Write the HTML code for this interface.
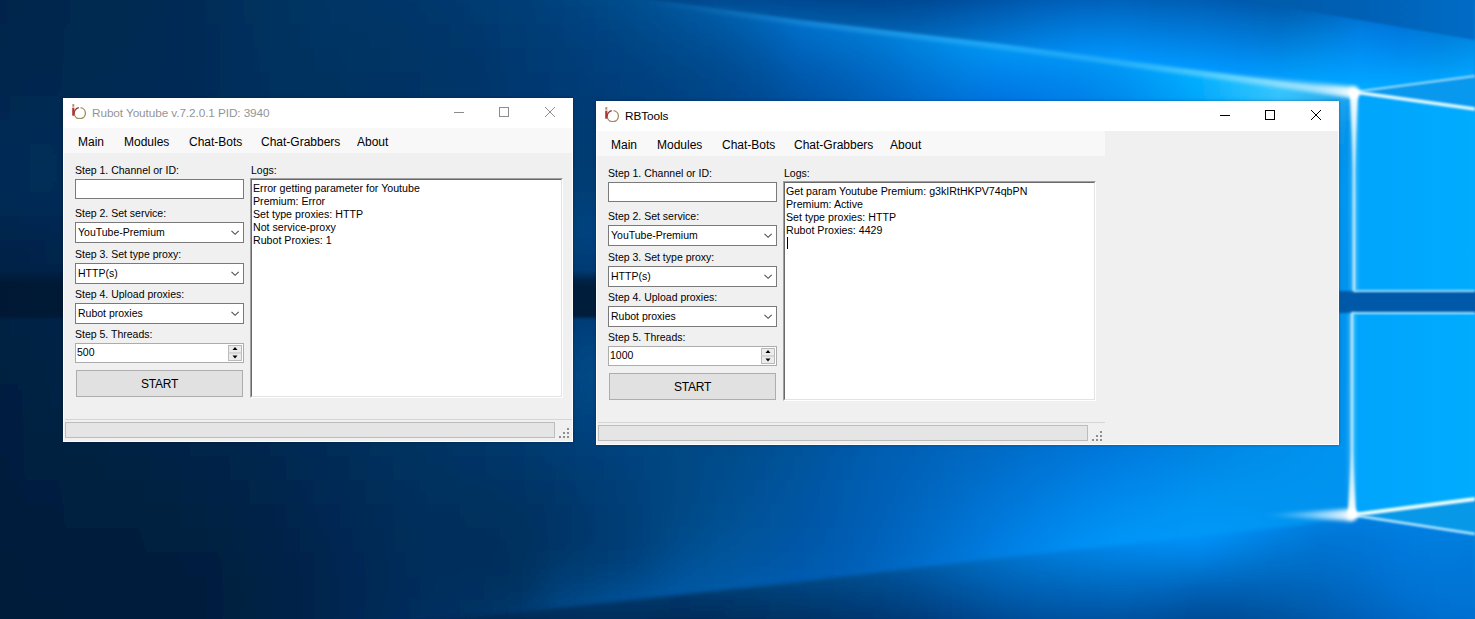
<!DOCTYPE html>
<html><head><meta charset="utf-8">
<style>
*{margin:0;padding:0;box-sizing:border-box}
html,body{width:1475px;height:619px;overflow:hidden;background:#003060}
body{position:relative;font-family:"Liberation Sans",sans-serif;-webkit-font-smoothing:antialiased}
.win{position:absolute;background:#f0f0f0;overflow:hidden;box-shadow:0 0 3px rgba(0,10,30,0.35)}
.bord{position:absolute;left:0;top:0;right:0;bottom:0;border:1px solid rgba(255,255,255,0.85);pointer-events:none}
.tb{position:absolute;left:0;top:0;right:0;height:30px;background:#fff}
.ttl{position:absolute;left:29px;top:7px;font-size:11.8px;letter-spacing:-0.1px;line-height:16px;white-space:nowrap}
.ico{position:absolute;left:8px;top:5px;width:16px;height:16px}
.menu{position:absolute;left:1px;top:30px;width:508px;height:25px;background:#f8f8f8}
.mi{position:absolute;top:37px;font-size:12px;line-height:14px;color:#000;white-space:nowrap}
.lbl{position:absolute;font-size:10.5px;line-height:12px;color:#000;white-space:nowrap}
.tbox{position:absolute;background:#fff;border:1px solid #7a7a7a}
.cmb{position:absolute;background:#fff;border:1px solid #7a7a7a;font-size:10.5px;line-height:12px;padding:3px 0 0 2px;white-space:nowrap}
.chev{position:absolute;left:155px;top:7px;width:9px;height:6px}
.num{position:absolute;background:#fff;border:1px solid #acacac;font-size:10.5px;line-height:12px;padding:2px 0 0 1px;white-space:nowrap}
.spin{position:absolute;left:152px;top:1px;width:14px;height:16px}
.btn{position:absolute;background:#e1e1e1;border:1px solid #adadad;font-size:12px;letter-spacing:-0.25px;text-align:center;color:#000}
.logs{position:absolute;background:#fff;border-top:1px solid #a0a0a0;border-left:1px solid #a0a0a0;border-right:1px solid #fff;border-bottom:1px solid #fff}
.logsin{position:absolute;left:0;top:0;right:0;bottom:0;border-top:1px solid #696969;border-left:1px solid #696969;border-right:1px solid #e3e3e3;border-bottom:1px solid #e3e3e3;padding:2px 0 0 1px;font-size:10.65px;line-height:13px;white-space:pre;color:#000}
.sep{position:absolute;height:1px;background:#d5d5d5}
.prog{position:absolute;background:#e5e5e5;border:1px solid #bcbcbc}
.grip{position:absolute;width:12px;height:12px}
</style></head><body>
<svg id="bg" width="1475" height="619" viewBox="0 0 1475 619" style="position:absolute;left:0;top:0">
<defs>
<filter id="fbv" filterUnits="userSpaceOnUse" x="-100" y="-100" width="1675" height="819"><feGaussianBlur stdDeviation="3 12"/></filter>
<filter id="fbt" filterUnits="userSpaceOnUse" x="-100" y="-100" width="1675" height="819"><feGaussianBlur stdDeviation="3 5"/></filter>
<filter id="b1" filterUnits="userSpaceOnUse" x="-100" y="-100" width="1675" height="819"><feGaussianBlur stdDeviation="1"/></filter>
<filter id="b2" filterUnits="userSpaceOnUse" x="-100" y="-100" width="1675" height="819"><feGaussianBlur stdDeviation="2"/></filter>
<filter id="b4" filterUnits="userSpaceOnUse" x="-100" y="-100" width="1675" height="819"><feGaussianBlur stdDeviation="4"/></filter>
<filter id="b8" filterUnits="userSpaceOnUse" x="-100" y="-100" width="1675" height="819"><feGaussianBlur stdDeviation="8"/></filter>
<clipPath id="cTop"><polygon points="600,-8 640,-2 800,20 1000,44 1200,71 1354,92 1475,76 1475,-20 600,-20"/></clipPath>
<clipPath id="cFloor"><polygon points="380,626 480,616 780,584 1000,558 1200,536 1300,525 1352,516 1475,534 1475,640 420,640"/></clipPath>
<linearGradient id="dband" gradientUnits="userSpaceOnUse" x1="0" y1="0" x2="1339" y2="0">
<stop offset="0" stop-color="#001834"/><stop offset="0.023" stop-color="#001935"/><stop offset="0.436" stop-color="#001e3c"/><stop offset="1" stop-color="#00386e"/>
</linearGradient>
<linearGradient id="dbandV" gradientUnits="userSpaceOnUse" x1="0" y1="271" x2="0" y2="320">
<stop offset="0" stop-color="#fff" stop-opacity="0"/><stop offset="0.2" stop-color="#fff" stop-opacity="0.85"/><stop offset="0.32" stop-color="#fff" stop-opacity="1"/><stop offset="0.91" stop-color="#fff" stop-opacity="1"/><stop offset="1" stop-color="#fff" stop-opacity="0"/>
</linearGradient>
<linearGradient id="bandA" gradientUnits="userSpaceOnUse" x1="1238" y1="0" x2="1475" y2="0"><stop offset="0" stop-color="#005cac"/><stop offset="0.4" stop-color="#005eb0"/><stop offset="1" stop-color="#006cc6"/></linearGradient>
<linearGradient id="e1g" gradientUnits="userSpaceOnUse" x1="640" y1="0" x2="1354" y2="0"><stop offset="0" stop-color="#fff" stop-opacity="0"/><stop offset="0.3" stop-color="#fff" stop-opacity="0.35"/><stop offset="0.7" stop-color="#fff" stop-opacity="0.55"/><stop offset="1" stop-color="#fff" stop-opacity="1"/></linearGradient>
<mask id="mE1"><rect x="-10" y="-10" width="1500" height="200" fill="url(#e1g)"/></mask>
<linearGradient id="sg1" gradientUnits="userSpaceOnUse" x1="1080" y1="0" x2="1356" y2="0"><stop offset="0" stop-color="#c0ecff" stop-opacity="0"/><stop offset="0.6" stop-color="#d8f4ff" stop-opacity="0.3"/><stop offset="0.85" stop-color="#e8f8ff" stop-opacity="0.55"/><stop offset="1" stop-color="#ffffff" stop-opacity="1"/></linearGradient>
<linearGradient id="sg2" gradientUnits="userSpaceOnUse" x1="1260" y1="0" x2="1356" y2="0"><stop offset="0" stop-color="#c0ecff" stop-opacity="0"/><stop offset="0.5" stop-color="#d8f4ff" stop-opacity="0.5"/><stop offset="1" stop-color="#ffffff" stop-opacity="1"/></linearGradient>
<linearGradient id="vg1" gradientUnits="userSpaceOnUse" x1="0" y1="92" x2="0" y2="170"><stop offset="0" stop-color="#fff" stop-opacity="1"/><stop offset="1" stop-color="#fff" stop-opacity="0"/></linearGradient>
<linearGradient id="vg2" gradientUnits="userSpaceOnUse" x1="0" y1="515" x2="0" y2="450"><stop offset="0" stop-color="#fff" stop-opacity="1"/><stop offset="1" stop-color="#fff" stop-opacity="0"/></linearGradient>
<mask id="m2"><rect width="1475" height="619" fill="url(#dbandV)"/></mask>
<linearGradient id="paneG" gradientUnits="userSpaceOnUse" x1="1354" y1="0" x2="1475" y2="0">
<stop offset="0" stop-color="#00a4fc"/><stop offset="1" stop-color="#00acff"/>
</linearGradient>
<linearGradient id="s0" gradientUnits="userSpaceOnUse" x1="-40" y1="0" x2="1520" y2="0"><stop offset="0.000" stop-color="#001f46"/><stop offset="0.026" stop-color="#002249"/><stop offset="0.051" stop-color="#00264c"/><stop offset="0.077" stop-color="#00284f"/><stop offset="0.103" stop-color="#002a51"/><stop offset="0.128" stop-color="#002c54"/><stop offset="0.154" stop-color="#002e58"/><stop offset="0.179" stop-color="#00315d"/><stop offset="0.205" stop-color="#003562"/><stop offset="0.231" stop-color="#003766"/><stop offset="0.256" stop-color="#00396a"/><stop offset="0.282" stop-color="#003b6d"/><stop offset="0.308" stop-color="#003d72"/><stop offset="0.333" stop-color="#004077"/><stop offset="0.359" stop-color="#00447d"/><stop offset="0.385" stop-color="#004985"/><stop offset="0.410" stop-color="#01508f"/><stop offset="0.436" stop-color="#01589b"/><stop offset="0.462" stop-color="#0161a9"/><stop offset="0.487" stop-color="#016bb9"/><stop offset="0.513" stop-color="#0177cb"/><stop offset="0.538" stop-color="#0282dc"/><stop offset="0.564" stop-color="#028de8"/><stop offset="0.590" stop-color="#0398f2"/><stop offset="0.615" stop-color="#03a3fa"/><stop offset="0.641" stop-color="#04adff"/><stop offset="0.667" stop-color="#06b6ff"/><stop offset="0.692" stop-color="#08bbff"/><stop offset="0.718" stop-color="#0bbfff"/><stop offset="0.744" stop-color="#0fc4ff"/><stop offset="0.769" stop-color="#16cbff"/><stop offset="0.795" stop-color="#21d2ff"/><stop offset="0.821" stop-color="#2dd7ff"/><stop offset="0.846" stop-color="#36d7ff"/><stop offset="0.872" stop-color="#38d0ff"/><stop offset="0.897" stop-color="#32c4ff"/><stop offset="0.923" stop-color="#28b5fe"/><stop offset="0.949" stop-color="#1da7f9"/><stop offset="0.974" stop-color="#149bf5"/><stop offset="1.000" stop-color="#0c92f3"/></linearGradient>
<linearGradient id="s1" gradientUnits="userSpaceOnUse" x1="-40" y1="0" x2="1520" y2="0"><stop offset="0.000" stop-color="#002046"/><stop offset="0.026" stop-color="#00234a"/><stop offset="0.051" stop-color="#00274d"/><stop offset="0.077" stop-color="#00284f"/><stop offset="0.103" stop-color="#002a50"/><stop offset="0.128" stop-color="#002b53"/><stop offset="0.154" stop-color="#002d57"/><stop offset="0.179" stop-color="#00305c"/><stop offset="0.205" stop-color="#003461"/><stop offset="0.231" stop-color="#003665"/><stop offset="0.256" stop-color="#003768"/><stop offset="0.282" stop-color="#00386b"/><stop offset="0.308" stop-color="#003a6f"/><stop offset="0.333" stop-color="#003c73"/><stop offset="0.359" stop-color="#004079"/><stop offset="0.385" stop-color="#004580"/><stop offset="0.410" stop-color="#004b89"/><stop offset="0.436" stop-color="#005294"/><stop offset="0.462" stop-color="#015aa2"/><stop offset="0.487" stop-color="#0164b1"/><stop offset="0.513" stop-color="#016fc4"/><stop offset="0.538" stop-color="#017bd6"/><stop offset="0.564" stop-color="#0185e1"/><stop offset="0.590" stop-color="#028fea"/><stop offset="0.615" stop-color="#029bf3"/><stop offset="0.641" stop-color="#03a6fc"/><stop offset="0.667" stop-color="#04aeff"/><stop offset="0.692" stop-color="#05b3ff"/><stop offset="0.718" stop-color="#08b6ff"/><stop offset="0.744" stop-color="#0cbcff"/><stop offset="0.769" stop-color="#12c3ff"/><stop offset="0.795" stop-color="#1dccff"/><stop offset="0.821" stop-color="#2cd4ff"/><stop offset="0.846" stop-color="#38d5ff"/><stop offset="0.872" stop-color="#3aceff"/><stop offset="0.897" stop-color="#32c0ff"/><stop offset="0.923" stop-color="#25affa"/><stop offset="0.949" stop-color="#19a1f5"/><stop offset="0.974" stop-color="#0f95f2"/><stop offset="1.000" stop-color="#078df0"/></linearGradient>
<linearGradient id="s2" gradientUnits="userSpaceOnUse" x1="-40" y1="0" x2="1520" y2="0"><stop offset="0.000" stop-color="#002147"/><stop offset="0.026" stop-color="#00244b"/><stop offset="0.051" stop-color="#00274e"/><stop offset="0.077" stop-color="#00294f"/><stop offset="0.103" stop-color="#002950"/><stop offset="0.128" stop-color="#002a52"/><stop offset="0.154" stop-color="#002c57"/><stop offset="0.179" stop-color="#002f5b"/><stop offset="0.205" stop-color="#003360"/><stop offset="0.231" stop-color="#003564"/><stop offset="0.256" stop-color="#003666"/><stop offset="0.282" stop-color="#003668"/><stop offset="0.308" stop-color="#00376c"/><stop offset="0.333" stop-color="#003a70"/><stop offset="0.359" stop-color="#003d76"/><stop offset="0.385" stop-color="#00417c"/><stop offset="0.410" stop-color="#004684"/><stop offset="0.436" stop-color="#004d8e"/><stop offset="0.462" stop-color="#00549a"/><stop offset="0.487" stop-color="#005ca8"/><stop offset="0.513" stop-color="#0067ba"/><stop offset="0.538" stop-color="#0073ce"/><stop offset="0.564" stop-color="#017cd8"/><stop offset="0.590" stop-color="#0186e1"/><stop offset="0.615" stop-color="#0191eb"/><stop offset="0.641" stop-color="#019df6"/><stop offset="0.667" stop-color="#02a6fe"/><stop offset="0.692" stop-color="#03a9ff"/><stop offset="0.718" stop-color="#05acff"/><stop offset="0.744" stop-color="#08b1ff"/><stop offset="0.769" stop-color="#0dbbff"/><stop offset="0.795" stop-color="#18c6ff"/><stop offset="0.821" stop-color="#2ad0ff"/><stop offset="0.846" stop-color="#39d3ff"/><stop offset="0.872" stop-color="#3bcbff"/><stop offset="0.897" stop-color="#30bbfd"/><stop offset="0.923" stop-color="#21a9f6"/><stop offset="0.949" stop-color="#149af1"/><stop offset="0.974" stop-color="#098fee"/><stop offset="1.000" stop-color="#0287ed"/></linearGradient>
<linearGradient id="s3" gradientUnits="userSpaceOnUse" x1="-40" y1="0" x2="1520" y2="0"><stop offset="0.000" stop-color="#002249"/><stop offset="0.026" stop-color="#00254c"/><stop offset="0.051" stop-color="#00284e"/><stop offset="0.077" stop-color="#00294f"/><stop offset="0.103" stop-color="#002950"/><stop offset="0.128" stop-color="#002a53"/><stop offset="0.154" stop-color="#002b57"/><stop offset="0.179" stop-color="#002e5b"/><stop offset="0.205" stop-color="#003260"/><stop offset="0.231" stop-color="#003463"/><stop offset="0.256" stop-color="#003564"/><stop offset="0.282" stop-color="#003566"/><stop offset="0.308" stop-color="#00366a"/><stop offset="0.333" stop-color="#00386e"/><stop offset="0.359" stop-color="#003b73"/><stop offset="0.385" stop-color="#003e79"/><stop offset="0.410" stop-color="#00427f"/><stop offset="0.436" stop-color="#004888"/><stop offset="0.462" stop-color="#004e92"/><stop offset="0.487" stop-color="#00549d"/><stop offset="0.513" stop-color="#005eae"/><stop offset="0.538" stop-color="#006ac4"/><stop offset="0.564" stop-color="#0072cd"/><stop offset="0.590" stop-color="#007bd6"/><stop offset="0.615" stop-color="#0086e2"/><stop offset="0.641" stop-color="#0093ee"/><stop offset="0.667" stop-color="#019cf8"/><stop offset="0.692" stop-color="#029dfb"/><stop offset="0.718" stop-color="#03a0fc"/><stop offset="0.744" stop-color="#04a6ff"/><stop offset="0.769" stop-color="#07b1ff"/><stop offset="0.795" stop-color="#12bfff"/><stop offset="0.821" stop-color="#28ccff"/><stop offset="0.846" stop-color="#3bd1ff"/><stop offset="0.872" stop-color="#3cc8ff"/><stop offset="0.897" stop-color="#2cb5f9"/><stop offset="0.923" stop-color="#1ba2f2"/><stop offset="0.949" stop-color="#0d94ee"/><stop offset="0.974" stop-color="#0489eb"/><stop offset="1.000" stop-color="#0083eb"/></linearGradient>
<linearGradient id="s4" gradientUnits="userSpaceOnUse" x1="-40" y1="0" x2="1520" y2="0"><stop offset="0.000" stop-color="#00234a"/><stop offset="0.026" stop-color="#00264d"/><stop offset="0.051" stop-color="#00284e"/><stop offset="0.077" stop-color="#00294f"/><stop offset="0.103" stop-color="#002951"/><stop offset="0.128" stop-color="#002a53"/><stop offset="0.154" stop-color="#002b57"/><stop offset="0.179" stop-color="#002e5b"/><stop offset="0.205" stop-color="#00315f"/><stop offset="0.231" stop-color="#003362"/><stop offset="0.256" stop-color="#003463"/><stop offset="0.282" stop-color="#003465"/><stop offset="0.308" stop-color="#003468"/><stop offset="0.333" stop-color="#00366c"/><stop offset="0.359" stop-color="#003971"/><stop offset="0.385" stop-color="#003c76"/><stop offset="0.410" stop-color="#003f7c"/><stop offset="0.436" stop-color="#004382"/><stop offset="0.462" stop-color="#00488a"/><stop offset="0.487" stop-color="#004d93"/><stop offset="0.513" stop-color="#0055a1"/><stop offset="0.538" stop-color="#005fb5"/><stop offset="0.564" stop-color="#0067bf"/><stop offset="0.590" stop-color="#0070cb"/><stop offset="0.615" stop-color="#007bd9"/><stop offset="0.641" stop-color="#0086e6"/><stop offset="0.667" stop-color="#008ef0"/><stop offset="0.692" stop-color="#0190f3"/><stop offset="0.718" stop-color="#0293f4"/><stop offset="0.744" stop-color="#019bf8"/><stop offset="0.769" stop-color="#01a7fe"/><stop offset="0.795" stop-color="#0ab6ff"/><stop offset="0.821" stop-color="#24c6ff"/><stop offset="0.846" stop-color="#3dcfff"/><stop offset="0.872" stop-color="#3bc4fd"/><stop offset="0.897" stop-color="#25adf4"/><stop offset="0.923" stop-color="#129aee"/><stop offset="0.949" stop-color="#068eeb"/><stop offset="0.974" stop-color="#0084e9"/><stop offset="1.000" stop-color="#007fe9"/></linearGradient>
<linearGradient id="s5" gradientUnits="userSpaceOnUse" x1="-40" y1="0" x2="1520" y2="0"><stop offset="0.000" stop-color="#00244b"/><stop offset="0.026" stop-color="#00274e"/><stop offset="0.051" stop-color="#00284f"/><stop offset="0.077" stop-color="#002950"/><stop offset="0.103" stop-color="#002a52"/><stop offset="0.128" stop-color="#002a54"/><stop offset="0.154" stop-color="#002b57"/><stop offset="0.179" stop-color="#002e5b"/><stop offset="0.205" stop-color="#00305e"/><stop offset="0.231" stop-color="#003261"/><stop offset="0.256" stop-color="#003362"/><stop offset="0.282" stop-color="#003364"/><stop offset="0.308" stop-color="#003467"/><stop offset="0.333" stop-color="#00366b"/><stop offset="0.359" stop-color="#003870"/><stop offset="0.385" stop-color="#003a75"/><stop offset="0.410" stop-color="#003d79"/><stop offset="0.436" stop-color="#00407e"/><stop offset="0.462" stop-color="#004484"/><stop offset="0.487" stop-color="#00488c"/><stop offset="0.513" stop-color="#004e98"/><stop offset="0.538" stop-color="#0056a8"/><stop offset="0.564" stop-color="#005db3"/><stop offset="0.590" stop-color="#0066c1"/><stop offset="0.615" stop-color="#0070d0"/><stop offset="0.641" stop-color="#0079dd"/><stop offset="0.667" stop-color="#007ce7"/><stop offset="0.692" stop-color="#0081eb"/><stop offset="0.718" stop-color="#0187ed"/><stop offset="0.744" stop-color="#0090f1"/><stop offset="0.769" stop-color="#009ef8"/><stop offset="0.795" stop-color="#04adfe"/><stop offset="0.821" stop-color="#20beff"/><stop offset="0.846" stop-color="#3ac9ff"/><stop offset="0.872" stop-color="#34bcf8"/><stop offset="0.897" stop-color="#19a2ef"/><stop offset="0.923" stop-color="#0892eb"/><stop offset="0.949" stop-color="#0089e9"/><stop offset="0.974" stop-color="#0081e8"/><stop offset="1.000" stop-color="#007de8"/></linearGradient>
<linearGradient id="s6" gradientUnits="userSpaceOnUse" x1="-40" y1="0" x2="1520" y2="0"><stop offset="0.000" stop-color="#00254d"/><stop offset="0.026" stop-color="#002850"/><stop offset="0.051" stop-color="#002a51"/><stop offset="0.077" stop-color="#002a52"/><stop offset="0.103" stop-color="#002a54"/><stop offset="0.128" stop-color="#002b56"/><stop offset="0.154" stop-color="#002c58"/><stop offset="0.179" stop-color="#002e5b"/><stop offset="0.205" stop-color="#00305e"/><stop offset="0.231" stop-color="#003160"/><stop offset="0.256" stop-color="#003262"/><stop offset="0.282" stop-color="#003363"/><stop offset="0.308" stop-color="#003466"/><stop offset="0.333" stop-color="#00356a"/><stop offset="0.359" stop-color="#00376f"/><stop offset="0.385" stop-color="#003973"/><stop offset="0.410" stop-color="#003b76"/><stop offset="0.436" stop-color="#003e7b"/><stop offset="0.462" stop-color="#004180"/><stop offset="0.487" stop-color="#004487"/><stop offset="0.513" stop-color="#004991"/><stop offset="0.538" stop-color="#00509f"/><stop offset="0.564" stop-color="#0057ab"/><stop offset="0.590" stop-color="#005fb9"/><stop offset="0.615" stop-color="#0067c8"/><stop offset="0.641" stop-color="#006dd5"/><stop offset="0.667" stop-color="#0071df"/><stop offset="0.692" stop-color="#0076e4"/><stop offset="0.718" stop-color="#007de6"/><stop offset="0.744" stop-color="#0088eb"/><stop offset="0.769" stop-color="#0096f2"/><stop offset="0.795" stop-color="#03a5f8"/><stop offset="0.821" stop-color="#1ab4fb"/><stop offset="0.846" stop-color="#2fbcfa"/><stop offset="0.872" stop-color="#24adf2"/><stop offset="0.897" stop-color="#0895ea"/><stop offset="0.923" stop-color="#008ce9"/><stop offset="0.949" stop-color="#0085e9"/><stop offset="0.974" stop-color="#0080e8"/><stop offset="1.000" stop-color="#007ce8"/></linearGradient>
<linearGradient id="s7" gradientUnits="userSpaceOnUse" x1="-40" y1="0" x2="1520" y2="0"><stop offset="0.000" stop-color="#00264e"/><stop offset="0.026" stop-color="#002952"/><stop offset="0.051" stop-color="#002b54"/><stop offset="0.077" stop-color="#002b55"/><stop offset="0.103" stop-color="#002b55"/><stop offset="0.128" stop-color="#002b57"/><stop offset="0.154" stop-color="#002c59"/><stop offset="0.179" stop-color="#002e5b"/><stop offset="0.205" stop-color="#002f5e"/><stop offset="0.231" stop-color="#003160"/><stop offset="0.256" stop-color="#003262"/><stop offset="0.282" stop-color="#003364"/><stop offset="0.308" stop-color="#003467"/><stop offset="0.333" stop-color="#00366a"/><stop offset="0.359" stop-color="#00376e"/><stop offset="0.385" stop-color="#003971"/><stop offset="0.410" stop-color="#003b74"/><stop offset="0.436" stop-color="#003d78"/><stop offset="0.462" stop-color="#00407d"/><stop offset="0.487" stop-color="#004284"/><stop offset="0.513" stop-color="#00478d"/><stop offset="0.538" stop-color="#004c99"/><stop offset="0.564" stop-color="#0052a5"/><stop offset="0.590" stop-color="#0059b3"/><stop offset="0.615" stop-color="#0060c1"/><stop offset="0.641" stop-color="#0066ce"/><stop offset="0.667" stop-color="#006ad7"/><stop offset="0.692" stop-color="#006fdd"/><stop offset="0.718" stop-color="#0077e1"/><stop offset="0.744" stop-color="#0082e6"/><stop offset="0.769" stop-color="#008fed"/><stop offset="0.795" stop-color="#029df2"/><stop offset="0.821" stop-color="#12a8f4"/><stop offset="0.846" stop-color="#1eacf3"/><stop offset="0.872" stop-color="#119eed"/><stop offset="0.897" stop-color="#008de8"/><stop offset="0.923" stop-color="#0089e9"/><stop offset="0.949" stop-color="#0085ea"/><stop offset="0.974" stop-color="#0080e9"/><stop offset="1.000" stop-color="#007ce9"/></linearGradient>
<linearGradient id="s8" gradientUnits="userSpaceOnUse" x1="-40" y1="0" x2="1520" y2="0"><stop offset="0.000" stop-color="#00274f"/><stop offset="0.026" stop-color="#002b54"/><stop offset="0.051" stop-color="#002d57"/><stop offset="0.077" stop-color="#002c57"/><stop offset="0.103" stop-color="#002c56"/><stop offset="0.128" stop-color="#002c57"/><stop offset="0.154" stop-color="#002c59"/><stop offset="0.179" stop-color="#002e5c"/><stop offset="0.205" stop-color="#002f5e"/><stop offset="0.231" stop-color="#003160"/><stop offset="0.256" stop-color="#003262"/><stop offset="0.282" stop-color="#003365"/><stop offset="0.308" stop-color="#003467"/><stop offset="0.333" stop-color="#00366b"/><stop offset="0.359" stop-color="#00386e"/><stop offset="0.385" stop-color="#003a70"/><stop offset="0.410" stop-color="#003b72"/><stop offset="0.436" stop-color="#003e77"/><stop offset="0.462" stop-color="#003f7c"/><stop offset="0.487" stop-color="#004282"/><stop offset="0.513" stop-color="#00458b"/><stop offset="0.538" stop-color="#004a95"/><stop offset="0.564" stop-color="#004fa1"/><stop offset="0.590" stop-color="#0055ae"/><stop offset="0.615" stop-color="#005cbb"/><stop offset="0.641" stop-color="#0061c8"/><stop offset="0.667" stop-color="#0065d1"/><stop offset="0.692" stop-color="#006bd8"/><stop offset="0.718" stop-color="#0073dd"/><stop offset="0.744" stop-color="#007ee2"/><stop offset="0.769" stop-color="#008ae8"/><stop offset="0.795" stop-color="#0195ec"/><stop offset="0.821" stop-color="#0b9dee"/><stop offset="0.846" stop-color="#109fed"/><stop offset="0.872" stop-color="#0798ec"/><stop offset="0.897" stop-color="#0090ec"/><stop offset="0.923" stop-color="#008bec"/><stop offset="0.949" stop-color="#0086ec"/><stop offset="0.974" stop-color="#0081eb"/><stop offset="1.000" stop-color="#007deb"/></linearGradient>
<linearGradient id="s9" gradientUnits="userSpaceOnUse" x1="-40" y1="0" x2="1520" y2="0"><stop offset="0.000" stop-color="#00274f"/><stop offset="0.026" stop-color="#002b54"/><stop offset="0.051" stop-color="#002d58"/><stop offset="0.077" stop-color="#002c57"/><stop offset="0.103" stop-color="#002c57"/><stop offset="0.128" stop-color="#002c57"/><stop offset="0.154" stop-color="#002c59"/><stop offset="0.179" stop-color="#002e5c"/><stop offset="0.205" stop-color="#002f5e"/><stop offset="0.231" stop-color="#003161"/><stop offset="0.256" stop-color="#003263"/><stop offset="0.282" stop-color="#003365"/><stop offset="0.308" stop-color="#003568"/><stop offset="0.333" stop-color="#00376c"/><stop offset="0.359" stop-color="#003a6f"/><stop offset="0.385" stop-color="#003c71"/><stop offset="0.410" stop-color="#003d74"/><stop offset="0.436" stop-color="#003f78"/><stop offset="0.462" stop-color="#00407c"/><stop offset="0.487" stop-color="#004281"/><stop offset="0.513" stop-color="#004589"/><stop offset="0.538" stop-color="#004993"/><stop offset="0.564" stop-color="#004e9e"/><stop offset="0.590" stop-color="#0053aa"/><stop offset="0.615" stop-color="#0059b7"/><stop offset="0.641" stop-color="#005ec3"/><stop offset="0.667" stop-color="#0063cc"/><stop offset="0.692" stop-color="#006ad4"/><stop offset="0.718" stop-color="#0072d9"/><stop offset="0.744" stop-color="#007bdf"/><stop offset="0.769" stop-color="#0086e4"/><stop offset="0.795" stop-color="#008fe8"/><stop offset="0.821" stop-color="#0594e9"/><stop offset="0.846" stop-color="#0695e9"/><stop offset="0.872" stop-color="#0397ed"/><stop offset="0.897" stop-color="#0097f2"/><stop offset="0.923" stop-color="#008ff0"/><stop offset="0.949" stop-color="#0089ee"/><stop offset="0.974" stop-color="#0084ed"/><stop offset="1.000" stop-color="#007fec"/></linearGradient>
<linearGradient id="s10" gradientUnits="userSpaceOnUse" x1="-40" y1="0" x2="1520" y2="0"><stop offset="0.000" stop-color="#00264d"/><stop offset="0.026" stop-color="#002952"/><stop offset="0.051" stop-color="#002b55"/><stop offset="0.077" stop-color="#002b55"/><stop offset="0.103" stop-color="#002b56"/><stop offset="0.128" stop-color="#002b57"/><stop offset="0.154" stop-color="#002c59"/><stop offset="0.179" stop-color="#002e5c"/><stop offset="0.205" stop-color="#002f5f"/><stop offset="0.231" stop-color="#003161"/><stop offset="0.256" stop-color="#003264"/><stop offset="0.282" stop-color="#003466"/><stop offset="0.308" stop-color="#003669"/><stop offset="0.333" stop-color="#00386d"/><stop offset="0.359" stop-color="#003b72"/><stop offset="0.385" stop-color="#003f77"/><stop offset="0.410" stop-color="#00417a"/><stop offset="0.436" stop-color="#00407b"/><stop offset="0.462" stop-color="#00407d"/><stop offset="0.487" stop-color="#004281"/><stop offset="0.513" stop-color="#004588"/><stop offset="0.538" stop-color="#004991"/><stop offset="0.564" stop-color="#004d9c"/><stop offset="0.590" stop-color="#0052a7"/><stop offset="0.615" stop-color="#0058b3"/><stop offset="0.641" stop-color="#005ebf"/><stop offset="0.667" stop-color="#0063c8"/><stop offset="0.692" stop-color="#0069d0"/><stop offset="0.718" stop-color="#0071d6"/><stop offset="0.744" stop-color="#007adc"/><stop offset="0.769" stop-color="#0083e1"/><stop offset="0.795" stop-color="#008be5"/><stop offset="0.821" stop-color="#018fe6"/><stop offset="0.846" stop-color="#008fe6"/><stop offset="0.872" stop-color="#0094ec"/><stop offset="0.897" stop-color="#0099f3"/><stop offset="0.923" stop-color="#0092f2"/><stop offset="0.949" stop-color="#008cf1"/><stop offset="0.974" stop-color="#0086ef"/><stop offset="1.000" stop-color="#0082ee"/></linearGradient>
<linearGradient id="s11" gradientUnits="userSpaceOnUse" x1="-40" y1="0" x2="1520" y2="0"><stop offset="0.000" stop-color="#00244a"/><stop offset="0.026" stop-color="#00264d"/><stop offset="0.051" stop-color="#002750"/><stop offset="0.077" stop-color="#002952"/><stop offset="0.103" stop-color="#002a54"/><stop offset="0.128" stop-color="#002b56"/><stop offset="0.154" stop-color="#002c58"/><stop offset="0.179" stop-color="#002e5b"/><stop offset="0.205" stop-color="#002f5f"/><stop offset="0.231" stop-color="#003161"/><stop offset="0.256" stop-color="#003264"/><stop offset="0.282" stop-color="#003467"/><stop offset="0.308" stop-color="#00366a"/><stop offset="0.333" stop-color="#00386e"/><stop offset="0.359" stop-color="#003c73"/><stop offset="0.385" stop-color="#00417b"/><stop offset="0.410" stop-color="#004380"/><stop offset="0.436" stop-color="#00417c"/><stop offset="0.462" stop-color="#00417d"/><stop offset="0.487" stop-color="#004381"/><stop offset="0.513" stop-color="#004588"/><stop offset="0.538" stop-color="#004991"/><stop offset="0.564" stop-color="#004e9a"/><stop offset="0.590" stop-color="#0053a5"/><stop offset="0.615" stop-color="#0058b1"/><stop offset="0.641" stop-color="#005ebc"/><stop offset="0.667" stop-color="#0064c5"/><stop offset="0.692" stop-color="#006acd"/><stop offset="0.718" stop-color="#0071d4"/><stop offset="0.744" stop-color="#0079da"/><stop offset="0.769" stop-color="#0082df"/><stop offset="0.795" stop-color="#0089e2"/><stop offset="0.821" stop-color="#008ce4"/><stop offset="0.846" stop-color="#008de6"/><stop offset="0.872" stop-color="#0092ec"/><stop offset="0.897" stop-color="#0097f2"/><stop offset="0.923" stop-color="#0094f4"/><stop offset="0.949" stop-color="#008ff3"/><stop offset="0.974" stop-color="#0089f1"/><stop offset="1.000" stop-color="#0084f0"/></linearGradient>
<linearGradient id="s12" gradientUnits="userSpaceOnUse" x1="-40" y1="0" x2="1520" y2="0"><stop offset="0.000" stop-color="#002247"/><stop offset="0.026" stop-color="#002349"/><stop offset="0.051" stop-color="#00244b"/><stop offset="0.077" stop-color="#00274e"/><stop offset="0.103" stop-color="#002952"/><stop offset="0.128" stop-color="#002a54"/><stop offset="0.154" stop-color="#002c57"/><stop offset="0.179" stop-color="#002d5b"/><stop offset="0.205" stop-color="#002f5e"/><stop offset="0.231" stop-color="#003161"/><stop offset="0.256" stop-color="#003364"/><stop offset="0.282" stop-color="#003467"/><stop offset="0.308" stop-color="#00366b"/><stop offset="0.333" stop-color="#00386e"/><stop offset="0.359" stop-color="#003b72"/><stop offset="0.385" stop-color="#003e77"/><stop offset="0.410" stop-color="#00407b"/><stop offset="0.436" stop-color="#00407b"/><stop offset="0.462" stop-color="#00417d"/><stop offset="0.487" stop-color="#004381"/><stop offset="0.513" stop-color="#004688"/><stop offset="0.538" stop-color="#004a90"/><stop offset="0.564" stop-color="#004e99"/><stop offset="0.590" stop-color="#0053a4"/><stop offset="0.615" stop-color="#0059af"/><stop offset="0.641" stop-color="#005fb9"/><stop offset="0.667" stop-color="#0065c3"/><stop offset="0.692" stop-color="#006bcb"/><stop offset="0.718" stop-color="#0071d2"/><stop offset="0.744" stop-color="#0079d8"/><stop offset="0.769" stop-color="#0081dd"/><stop offset="0.795" stop-color="#0088e1"/><stop offset="0.821" stop-color="#008be4"/><stop offset="0.846" stop-color="#008de7"/><stop offset="0.872" stop-color="#0092ec"/><stop offset="0.897" stop-color="#0096f2"/><stop offset="0.923" stop-color="#0095f4"/><stop offset="0.949" stop-color="#0091f4"/><stop offset="0.974" stop-color="#008cf3"/><stop offset="1.000" stop-color="#0087f1"/></linearGradient>
<linearGradient id="s13" gradientUnits="userSpaceOnUse" x1="-40" y1="0" x2="1520" y2="0"><stop offset="0.000" stop-color="#002145"/><stop offset="0.026" stop-color="#002246"/><stop offset="0.051" stop-color="#002348"/><stop offset="0.077" stop-color="#00254c"/><stop offset="0.103" stop-color="#00274f"/><stop offset="0.128" stop-color="#002953"/><stop offset="0.154" stop-color="#002b56"/><stop offset="0.179" stop-color="#002d5a"/><stop offset="0.205" stop-color="#002f5e"/><stop offset="0.231" stop-color="#003161"/><stop offset="0.256" stop-color="#003364"/><stop offset="0.282" stop-color="#003568"/><stop offset="0.308" stop-color="#00366b"/><stop offset="0.333" stop-color="#00386f"/><stop offset="0.359" stop-color="#003971"/><stop offset="0.385" stop-color="#003870"/><stop offset="0.410" stop-color="#003971"/><stop offset="0.436" stop-color="#003e79"/><stop offset="0.462" stop-color="#00427d"/><stop offset="0.487" stop-color="#004481"/><stop offset="0.513" stop-color="#004787"/><stop offset="0.538" stop-color="#004b8f"/><stop offset="0.564" stop-color="#004f98"/><stop offset="0.590" stop-color="#0054a2"/><stop offset="0.615" stop-color="#005aad"/><stop offset="0.641" stop-color="#0060b8"/><stop offset="0.667" stop-color="#0067c1"/><stop offset="0.692" stop-color="#006cc9"/><stop offset="0.718" stop-color="#0072d0"/><stop offset="0.744" stop-color="#0079d6"/><stop offset="0.769" stop-color="#0081dc"/><stop offset="0.795" stop-color="#0088e1"/><stop offset="0.821" stop-color="#008be4"/><stop offset="0.846" stop-color="#008ee7"/><stop offset="0.872" stop-color="#0092ec"/><stop offset="0.897" stop-color="#0095f1"/><stop offset="0.923" stop-color="#0095f4"/><stop offset="0.949" stop-color="#0092f5"/><stop offset="0.974" stop-color="#008ef4"/><stop offset="1.000" stop-color="#0089f2"/></linearGradient>
<linearGradient id="s14" gradientUnits="userSpaceOnUse" x1="-40" y1="0" x2="1520" y2="0"><stop offset="0.000" stop-color="#002043"/><stop offset="0.026" stop-color="#002144"/><stop offset="0.051" stop-color="#002346"/><stop offset="0.077" stop-color="#00254a"/><stop offset="0.103" stop-color="#00264d"/><stop offset="0.128" stop-color="#002851"/><stop offset="0.154" stop-color="#002a55"/><stop offset="0.179" stop-color="#002c59"/><stop offset="0.205" stop-color="#002e5d"/><stop offset="0.231" stop-color="#003160"/><stop offset="0.256" stop-color="#003364"/><stop offset="0.282" stop-color="#003568"/><stop offset="0.308" stop-color="#00376b"/><stop offset="0.333" stop-color="#00396f"/><stop offset="0.359" stop-color="#003a71"/><stop offset="0.385" stop-color="#003971"/><stop offset="0.410" stop-color="#003a72"/><stop offset="0.436" stop-color="#003f79"/><stop offset="0.462" stop-color="#00427e"/><stop offset="0.487" stop-color="#004581"/><stop offset="0.513" stop-color="#004886"/><stop offset="0.538" stop-color="#004c8e"/><stop offset="0.564" stop-color="#005097"/><stop offset="0.590" stop-color="#0055a1"/><stop offset="0.615" stop-color="#005bac"/><stop offset="0.641" stop-color="#0061b6"/><stop offset="0.667" stop-color="#0068c0"/><stop offset="0.692" stop-color="#006dc7"/><stop offset="0.718" stop-color="#0072ce"/><stop offset="0.744" stop-color="#0079d4"/><stop offset="0.769" stop-color="#0081da"/><stop offset="0.795" stop-color="#0088e0"/><stop offset="0.821" stop-color="#008be3"/><stop offset="0.846" stop-color="#008ee7"/><stop offset="0.872" stop-color="#0092ec"/><stop offset="0.897" stop-color="#0095f1"/><stop offset="0.923" stop-color="#0095f4"/><stop offset="0.949" stop-color="#0094f5"/><stop offset="0.974" stop-color="#0090f5"/><stop offset="1.000" stop-color="#008cf3"/></linearGradient>
<linearGradient id="s15" gradientUnits="userSpaceOnUse" x1="-40" y1="0" x2="1520" y2="0"><stop offset="0.000" stop-color="#001f41"/><stop offset="0.026" stop-color="#002143"/><stop offset="0.051" stop-color="#002245"/><stop offset="0.077" stop-color="#002448"/><stop offset="0.103" stop-color="#00264c"/><stop offset="0.128" stop-color="#00284f"/><stop offset="0.154" stop-color="#002a53"/><stop offset="0.179" stop-color="#002c57"/><stop offset="0.205" stop-color="#002e5b"/><stop offset="0.231" stop-color="#00305f"/><stop offset="0.256" stop-color="#003263"/><stop offset="0.282" stop-color="#003567"/><stop offset="0.308" stop-color="#00376b"/><stop offset="0.333" stop-color="#003970"/><stop offset="0.359" stop-color="#003b74"/><stop offset="0.385" stop-color="#003c77"/><stop offset="0.410" stop-color="#003e79"/><stop offset="0.436" stop-color="#00427d"/><stop offset="0.462" stop-color="#00447f"/><stop offset="0.487" stop-color="#004682"/><stop offset="0.513" stop-color="#004986"/><stop offset="0.538" stop-color="#004d8d"/><stop offset="0.564" stop-color="#005196"/><stop offset="0.590" stop-color="#0056a1"/><stop offset="0.615" stop-color="#005cab"/><stop offset="0.641" stop-color="#0062b5"/><stop offset="0.667" stop-color="#0068be"/><stop offset="0.692" stop-color="#006cc6"/><stop offset="0.718" stop-color="#0071cd"/><stop offset="0.744" stop-color="#0078d3"/><stop offset="0.769" stop-color="#007fd9"/><stop offset="0.795" stop-color="#0086de"/><stop offset="0.821" stop-color="#008ae2"/><stop offset="0.846" stop-color="#008ee7"/><stop offset="0.872" stop-color="#0091ec"/><stop offset="0.897" stop-color="#0095f1"/><stop offset="0.923" stop-color="#0096f4"/><stop offset="0.949" stop-color="#0095f6"/><stop offset="0.974" stop-color="#0092f6"/><stop offset="1.000" stop-color="#008ef4"/></linearGradient>
<linearGradient id="s16" gradientUnits="userSpaceOnUse" x1="-40" y1="0" x2="1520" y2="0"><stop offset="0.000" stop-color="#001f40"/><stop offset="0.026" stop-color="#002142"/><stop offset="0.051" stop-color="#002244"/><stop offset="0.077" stop-color="#002347"/><stop offset="0.103" stop-color="#00254a"/><stop offset="0.128" stop-color="#00274d"/><stop offset="0.154" stop-color="#002951"/><stop offset="0.179" stop-color="#002b55"/><stop offset="0.205" stop-color="#002d5a"/><stop offset="0.231" stop-color="#00305e"/><stop offset="0.256" stop-color="#003262"/><stop offset="0.282" stop-color="#003466"/><stop offset="0.308" stop-color="#00376b"/><stop offset="0.333" stop-color="#003a71"/><stop offset="0.359" stop-color="#003d77"/><stop offset="0.385" stop-color="#00427e"/><stop offset="0.410" stop-color="#004582"/><stop offset="0.436" stop-color="#004581"/><stop offset="0.462" stop-color="#004681"/><stop offset="0.487" stop-color="#004883"/><stop offset="0.513" stop-color="#004a86"/><stop offset="0.538" stop-color="#004e8c"/><stop offset="0.564" stop-color="#005296"/><stop offset="0.590" stop-color="#0057a1"/><stop offset="0.615" stop-color="#005dac"/><stop offset="0.641" stop-color="#0062b5"/><stop offset="0.667" stop-color="#0067bd"/><stop offset="0.692" stop-color="#006cc5"/><stop offset="0.718" stop-color="#0071cc"/><stop offset="0.744" stop-color="#0076d2"/><stop offset="0.769" stop-color="#007dd7"/><stop offset="0.795" stop-color="#0083dc"/><stop offset="0.821" stop-color="#0089e1"/><stop offset="0.846" stop-color="#008de7"/><stop offset="0.872" stop-color="#0091ec"/><stop offset="0.897" stop-color="#0095f1"/><stop offset="0.923" stop-color="#0096f5"/><stop offset="0.949" stop-color="#0096f6"/><stop offset="0.974" stop-color="#0093f6"/><stop offset="1.000" stop-color="#008ff5"/></linearGradient>
<linearGradient id="s17" gradientUnits="userSpaceOnUse" x1="-40" y1="0" x2="1520" y2="0"><stop offset="0.000" stop-color="#001e3f"/><stop offset="0.026" stop-color="#002041"/><stop offset="0.051" stop-color="#002143"/><stop offset="0.077" stop-color="#002346"/><stop offset="0.103" stop-color="#002448"/><stop offset="0.128" stop-color="#00264c"/><stop offset="0.154" stop-color="#00284f"/><stop offset="0.179" stop-color="#002a54"/><stop offset="0.205" stop-color="#002d58"/><stop offset="0.231" stop-color="#002f5c"/><stop offset="0.256" stop-color="#003261"/><stop offset="0.282" stop-color="#003465"/><stop offset="0.308" stop-color="#00376a"/><stop offset="0.333" stop-color="#003a71"/><stop offset="0.359" stop-color="#003f78"/><stop offset="0.385" stop-color="#004582"/><stop offset="0.410" stop-color="#004987"/><stop offset="0.436" stop-color="#004784"/><stop offset="0.462" stop-color="#004883"/><stop offset="0.487" stop-color="#004984"/><stop offset="0.513" stop-color="#004b87"/><stop offset="0.538" stop-color="#004f8d"/><stop offset="0.564" stop-color="#005398"/><stop offset="0.590" stop-color="#0058a3"/><stop offset="0.615" stop-color="#005dad"/><stop offset="0.641" stop-color="#0062b5"/><stop offset="0.667" stop-color="#0067bd"/><stop offset="0.692" stop-color="#006bc5"/><stop offset="0.718" stop-color="#0070cc"/><stop offset="0.744" stop-color="#0075d2"/><stop offset="0.769" stop-color="#007bd7"/><stop offset="0.795" stop-color="#0081db"/><stop offset="0.821" stop-color="#0087e0"/><stop offset="0.846" stop-color="#008de7"/><stop offset="0.872" stop-color="#0091ec"/><stop offset="0.897" stop-color="#0095f1"/><stop offset="0.923" stop-color="#0097f5"/><stop offset="0.949" stop-color="#0097f7"/><stop offset="0.974" stop-color="#0095f7"/><stop offset="1.000" stop-color="#0091f5"/></linearGradient>
<linearGradient id="s18" gradientUnits="userSpaceOnUse" x1="-40" y1="0" x2="1520" y2="0"><stop offset="0.000" stop-color="#001e3f"/><stop offset="0.026" stop-color="#001f41"/><stop offset="0.051" stop-color="#002043"/><stop offset="0.077" stop-color="#002245"/><stop offset="0.103" stop-color="#002347"/><stop offset="0.128" stop-color="#00254a"/><stop offset="0.154" stop-color="#00274d"/><stop offset="0.179" stop-color="#002951"/><stop offset="0.205" stop-color="#002c56"/><stop offset="0.231" stop-color="#002e5a"/><stop offset="0.256" stop-color="#00315f"/><stop offset="0.282" stop-color="#003364"/><stop offset="0.308" stop-color="#003669"/><stop offset="0.333" stop-color="#00396f"/><stop offset="0.359" stop-color="#003e77"/><stop offset="0.385" stop-color="#004480"/><stop offset="0.410" stop-color="#004785"/><stop offset="0.436" stop-color="#004884"/><stop offset="0.462" stop-color="#004884"/><stop offset="0.487" stop-color="#004a85"/><stop offset="0.513" stop-color="#004c89"/><stop offset="0.538" stop-color="#00508f"/><stop offset="0.564" stop-color="#00559b"/><stop offset="0.590" stop-color="#005aa6"/><stop offset="0.615" stop-color="#005eaf"/><stop offset="0.641" stop-color="#0063b6"/><stop offset="0.667" stop-color="#0067be"/><stop offset="0.692" stop-color="#006bc6"/><stop offset="0.718" stop-color="#0070ce"/><stop offset="0.744" stop-color="#0075d4"/><stop offset="0.769" stop-color="#007ad7"/><stop offset="0.795" stop-color="#007fda"/><stop offset="0.821" stop-color="#0086e0"/><stop offset="0.846" stop-color="#008de7"/><stop offset="0.872" stop-color="#0092ed"/><stop offset="0.897" stop-color="#0095f2"/><stop offset="0.923" stop-color="#0097f5"/><stop offset="0.949" stop-color="#0098f7"/><stop offset="0.974" stop-color="#0096f7"/><stop offset="1.000" stop-color="#0092f5"/></linearGradient>
<linearGradient id="s19" gradientUnits="userSpaceOnUse" x1="-40" y1="0" x2="1520" y2="0"><stop offset="0.000" stop-color="#001e3e"/><stop offset="0.026" stop-color="#001f40"/><stop offset="0.051" stop-color="#002042"/><stop offset="0.077" stop-color="#002143"/><stop offset="0.103" stop-color="#002245"/><stop offset="0.128" stop-color="#002448"/><stop offset="0.154" stop-color="#00264b"/><stop offset="0.179" stop-color="#00284f"/><stop offset="0.205" stop-color="#002b54"/><stop offset="0.231" stop-color="#002e58"/><stop offset="0.256" stop-color="#00305d"/><stop offset="0.282" stop-color="#003262"/><stop offset="0.308" stop-color="#003567"/><stop offset="0.333" stop-color="#00386c"/><stop offset="0.359" stop-color="#003c73"/><stop offset="0.385" stop-color="#00407b"/><stop offset="0.410" stop-color="#004480"/><stop offset="0.436" stop-color="#004783"/><stop offset="0.462" stop-color="#004884"/><stop offset="0.487" stop-color="#004b87"/><stop offset="0.513" stop-color="#004e8c"/><stop offset="0.538" stop-color="#005193"/><stop offset="0.564" stop-color="#0057a0"/><stop offset="0.590" stop-color="#005cab"/><stop offset="0.615" stop-color="#0060b2"/><stop offset="0.641" stop-color="#0064b9"/><stop offset="0.667" stop-color="#0068c0"/><stop offset="0.692" stop-color="#006dc9"/><stop offset="0.718" stop-color="#0071d1"/><stop offset="0.744" stop-color="#0076d7"/><stop offset="0.769" stop-color="#007bda"/><stop offset="0.795" stop-color="#0080dc"/><stop offset="0.821" stop-color="#0087e2"/><stop offset="0.846" stop-color="#008de8"/><stop offset="0.872" stop-color="#0092ed"/><stop offset="0.897" stop-color="#0095f2"/><stop offset="0.923" stop-color="#0098f5"/><stop offset="0.949" stop-color="#0098f6"/><stop offset="0.974" stop-color="#0096f6"/><stop offset="1.000" stop-color="#0092f4"/></linearGradient>
<linearGradient id="s20" gradientUnits="userSpaceOnUse" x1="-40" y1="0" x2="1520" y2="0"><stop offset="0.000" stop-color="#001d3d"/><stop offset="0.026" stop-color="#001f3f"/><stop offset="0.051" stop-color="#002041"/><stop offset="0.077" stop-color="#002142"/><stop offset="0.103" stop-color="#002244"/><stop offset="0.128" stop-color="#002346"/><stop offset="0.154" stop-color="#002549"/><stop offset="0.179" stop-color="#00274d"/><stop offset="0.205" stop-color="#002951"/><stop offset="0.231" stop-color="#002c56"/><stop offset="0.256" stop-color="#002f5b"/><stop offset="0.282" stop-color="#003160"/><stop offset="0.308" stop-color="#003364"/><stop offset="0.333" stop-color="#003669"/><stop offset="0.359" stop-color="#00396e"/><stop offset="0.385" stop-color="#003d75"/><stop offset="0.410" stop-color="#00417c"/><stop offset="0.436" stop-color="#004580"/><stop offset="0.462" stop-color="#004884"/><stop offset="0.487" stop-color="#004b89"/><stop offset="0.513" stop-color="#004f90"/><stop offset="0.538" stop-color="#005399"/><stop offset="0.564" stop-color="#0058a6"/><stop offset="0.590" stop-color="#005daf"/><stop offset="0.615" stop-color="#0062b6"/><stop offset="0.641" stop-color="#0066bd"/><stop offset="0.667" stop-color="#006bc5"/><stop offset="0.692" stop-color="#0070ce"/><stop offset="0.718" stop-color="#0074d6"/><stop offset="0.744" stop-color="#0079dc"/><stop offset="0.769" stop-color="#007fdf"/><stop offset="0.795" stop-color="#0084e1"/><stop offset="0.821" stop-color="#008ae6"/><stop offset="0.846" stop-color="#008fea"/><stop offset="0.872" stop-color="#0092ee"/><stop offset="0.897" stop-color="#0095f1"/><stop offset="0.923" stop-color="#0097f4"/><stop offset="0.949" stop-color="#0098f6"/><stop offset="0.974" stop-color="#0097f6"/><stop offset="1.000" stop-color="#0092f3"/></linearGradient>
<linearGradient id="s21" gradientUnits="userSpaceOnUse" x1="-40" y1="0" x2="1520" y2="0"><stop offset="0.000" stop-color="#001d3c"/><stop offset="0.026" stop-color="#001f3e"/><stop offset="0.051" stop-color="#002040"/><stop offset="0.077" stop-color="#002041"/><stop offset="0.103" stop-color="#002142"/><stop offset="0.128" stop-color="#002244"/><stop offset="0.154" stop-color="#002347"/><stop offset="0.179" stop-color="#00254b"/><stop offset="0.205" stop-color="#00284f"/><stop offset="0.231" stop-color="#002b54"/><stop offset="0.256" stop-color="#002d59"/><stop offset="0.282" stop-color="#00305d"/><stop offset="0.308" stop-color="#003261"/><stop offset="0.333" stop-color="#003364"/><stop offset="0.359" stop-color="#003669"/><stop offset="0.385" stop-color="#003a70"/><stop offset="0.410" stop-color="#003e77"/><stop offset="0.436" stop-color="#00437d"/><stop offset="0.462" stop-color="#004884"/><stop offset="0.487" stop-color="#004c8b"/><stop offset="0.513" stop-color="#005094"/><stop offset="0.538" stop-color="#00549d"/><stop offset="0.564" stop-color="#0059a9"/><stop offset="0.590" stop-color="#005eb2"/><stop offset="0.615" stop-color="#0063ba"/><stop offset="0.641" stop-color="#0069c3"/><stop offset="0.667" stop-color="#006ecc"/><stop offset="0.692" stop-color="#0074d5"/><stop offset="0.718" stop-color="#007add"/><stop offset="0.744" stop-color="#017fe3"/><stop offset="0.769" stop-color="#0085e6"/><stop offset="0.795" stop-color="#008ae8"/><stop offset="0.821" stop-color="#008eea"/><stop offset="0.846" stop-color="#0091ed"/><stop offset="0.872" stop-color="#0093ef"/><stop offset="0.897" stop-color="#0095f1"/><stop offset="0.923" stop-color="#0097f3"/><stop offset="0.949" stop-color="#0098f5"/><stop offset="0.974" stop-color="#0096f4"/><stop offset="1.000" stop-color="#0091f2"/></linearGradient>
<linearGradient id="s22" gradientUnits="userSpaceOnUse" x1="-40" y1="0" x2="1520" y2="0"><stop offset="0.000" stop-color="#001d3c"/><stop offset="0.026" stop-color="#001e3e"/><stop offset="0.051" stop-color="#001f3f"/><stop offset="0.077" stop-color="#002040"/><stop offset="0.103" stop-color="#002041"/><stop offset="0.128" stop-color="#002142"/><stop offset="0.154" stop-color="#002245"/><stop offset="0.179" stop-color="#002448"/><stop offset="0.205" stop-color="#00264d"/><stop offset="0.231" stop-color="#002952"/><stop offset="0.256" stop-color="#002c57"/><stop offset="0.282" stop-color="#002f5b"/><stop offset="0.308" stop-color="#00305f"/><stop offset="0.333" stop-color="#003160"/><stop offset="0.359" stop-color="#003364"/><stop offset="0.385" stop-color="#00376b"/><stop offset="0.410" stop-color="#003c74"/><stop offset="0.436" stop-color="#00427b"/><stop offset="0.462" stop-color="#004884"/><stop offset="0.487" stop-color="#004d8e"/><stop offset="0.513" stop-color="#005197"/><stop offset="0.538" stop-color="#0055a1"/><stop offset="0.564" stop-color="#005aab"/><stop offset="0.590" stop-color="#005fb5"/><stop offset="0.615" stop-color="#0065be"/><stop offset="0.641" stop-color="#006cc8"/><stop offset="0.667" stop-color="#0073d3"/><stop offset="0.692" stop-color="#017adc"/><stop offset="0.718" stop-color="#0281e4"/><stop offset="0.744" stop-color="#0287ea"/><stop offset="0.769" stop-color="#018ced"/><stop offset="0.795" stop-color="#0091ef"/><stop offset="0.821" stop-color="#0093ef"/><stop offset="0.846" stop-color="#0093ef"/><stop offset="0.872" stop-color="#0094f0"/><stop offset="0.897" stop-color="#0094f0"/><stop offset="0.923" stop-color="#0095f1"/><stop offset="0.949" stop-color="#0096f3"/><stop offset="0.974" stop-color="#0094f2"/><stop offset="1.000" stop-color="#008fef"/></linearGradient>
<linearGradient id="s23" gradientUnits="userSpaceOnUse" x1="-40" y1="0" x2="1520" y2="0"><stop offset="0.000" stop-color="#001d3b"/><stop offset="0.026" stop-color="#001e3d"/><stop offset="0.051" stop-color="#001f3e"/><stop offset="0.077" stop-color="#00203f"/><stop offset="0.103" stop-color="#00203f"/><stop offset="0.128" stop-color="#002040"/><stop offset="0.154" stop-color="#002143"/><stop offset="0.179" stop-color="#002246"/><stop offset="0.205" stop-color="#00244b"/><stop offset="0.231" stop-color="#002751"/><stop offset="0.256" stop-color="#002a56"/><stop offset="0.282" stop-color="#002d5a"/><stop offset="0.308" stop-color="#002f5c"/><stop offset="0.333" stop-color="#00305d"/><stop offset="0.359" stop-color="#003160"/><stop offset="0.385" stop-color="#003568"/><stop offset="0.410" stop-color="#003a71"/><stop offset="0.436" stop-color="#00417a"/><stop offset="0.462" stop-color="#004986"/><stop offset="0.487" stop-color="#004f90"/><stop offset="0.513" stop-color="#00539a"/><stop offset="0.538" stop-color="#0055a3"/><stop offset="0.564" stop-color="#005aad"/><stop offset="0.590" stop-color="#0060b7"/><stop offset="0.615" stop-color="#0068c2"/><stop offset="0.641" stop-color="#006fce"/><stop offset="0.667" stop-color="#0078da"/><stop offset="0.692" stop-color="#0180e4"/><stop offset="0.718" stop-color="#0388ec"/><stop offset="0.744" stop-color="#048ff1"/><stop offset="0.769" stop-color="#0393f3"/><stop offset="0.795" stop-color="#0196f5"/><stop offset="0.821" stop-color="#0096f3"/><stop offset="0.846" stop-color="#0095f2"/><stop offset="0.872" stop-color="#0094f0"/><stop offset="0.897" stop-color="#0193ef"/><stop offset="0.923" stop-color="#0192ef"/><stop offset="0.949" stop-color="#0192ef"/><stop offset="0.974" stop-color="#0091ef"/><stop offset="1.000" stop-color="#008aeb"/></linearGradient>
<linearGradient id="s24" gradientUnits="userSpaceOnUse" x1="-40" y1="0" x2="1520" y2="0"><stop offset="0.000" stop-color="#001c3a"/><stop offset="0.026" stop-color="#001e3c"/><stop offset="0.051" stop-color="#001f3d"/><stop offset="0.077" stop-color="#001f3e"/><stop offset="0.103" stop-color="#001f3e"/><stop offset="0.128" stop-color="#00203f"/><stop offset="0.154" stop-color="#002041"/><stop offset="0.179" stop-color="#002144"/><stop offset="0.205" stop-color="#00234a"/><stop offset="0.231" stop-color="#00264f"/><stop offset="0.256" stop-color="#002955"/><stop offset="0.282" stop-color="#002d59"/><stop offset="0.308" stop-color="#002f5c"/><stop offset="0.333" stop-color="#002f5b"/><stop offset="0.359" stop-color="#00305e"/><stop offset="0.385" stop-color="#003568"/><stop offset="0.410" stop-color="#003a70"/><stop offset="0.436" stop-color="#00417b"/><stop offset="0.462" stop-color="#004b8a"/><stop offset="0.487" stop-color="#005295"/><stop offset="0.513" stop-color="#00559e"/><stop offset="0.538" stop-color="#0057a6"/><stop offset="0.564" stop-color="#005baf"/><stop offset="0.590" stop-color="#0062ba"/><stop offset="0.615" stop-color="#006ac6"/><stop offset="0.641" stop-color="#0073d3"/><stop offset="0.667" stop-color="#007ce0"/><stop offset="0.692" stop-color="#0285ea"/><stop offset="0.718" stop-color="#058ef2"/><stop offset="0.744" stop-color="#0695f7"/><stop offset="0.769" stop-color="#0498f8"/><stop offset="0.795" stop-color="#0299f8"/><stop offset="0.821" stop-color="#0198f6"/><stop offset="0.846" stop-color="#0196f3"/><stop offset="0.872" stop-color="#0193f0"/><stop offset="0.897" stop-color="#0191ee"/><stop offset="0.923" stop-color="#018eec"/><stop offset="0.949" stop-color="#018cea"/><stop offset="0.974" stop-color="#008ae8"/><stop offset="1.000" stop-color="#0084e5"/></linearGradient>
<linearGradient id="s25" gradientUnits="userSpaceOnUse" x1="-40" y1="0" x2="1520" y2="0"><stop offset="0.000" stop-color="#001c3a"/><stop offset="0.026" stop-color="#001e3b"/><stop offset="0.051" stop-color="#001f3c"/><stop offset="0.077" stop-color="#001f3d"/><stop offset="0.103" stop-color="#001f3d"/><stop offset="0.128" stop-color="#001f3e"/><stop offset="0.154" stop-color="#001f3f"/><stop offset="0.179" stop-color="#002043"/><stop offset="0.205" stop-color="#002248"/><stop offset="0.231" stop-color="#00254e"/><stop offset="0.256" stop-color="#002854"/><stop offset="0.282" stop-color="#002c59"/><stop offset="0.308" stop-color="#002f5c"/><stop offset="0.333" stop-color="#002e5b"/><stop offset="0.359" stop-color="#00305f"/><stop offset="0.385" stop-color="#00396d"/><stop offset="0.410" stop-color="#003d74"/><stop offset="0.436" stop-color="#004481"/><stop offset="0.462" stop-color="#005094"/><stop offset="0.487" stop-color="#00559d"/><stop offset="0.513" stop-color="#0057a4"/><stop offset="0.538" stop-color="#0059ab"/><stop offset="0.564" stop-color="#005db3"/><stop offset="0.590" stop-color="#0064be"/><stop offset="0.615" stop-color="#006dcb"/><stop offset="0.641" stop-color="#0076d8"/><stop offset="0.667" stop-color="#0180e4"/><stop offset="0.692" stop-color="#0389ee"/><stop offset="0.718" stop-color="#0693f6"/><stop offset="0.744" stop-color="#0699fb"/><stop offset="0.769" stop-color="#059bfc"/><stop offset="0.795" stop-color="#039bfb"/><stop offset="0.821" stop-color="#0299f8"/><stop offset="0.846" stop-color="#0296f4"/><stop offset="0.872" stop-color="#0192f0"/><stop offset="0.897" stop-color="#018eeb"/><stop offset="0.923" stop-color="#018ae8"/><stop offset="0.949" stop-color="#0185e4"/><stop offset="0.974" stop-color="#0081e1"/><stop offset="1.000" stop-color="#007cde"/></linearGradient>
<linearGradient id="s26" gradientUnits="userSpaceOnUse" x1="-40" y1="0" x2="1520" y2="0"><stop offset="0.000" stop-color="#001b39"/><stop offset="0.026" stop-color="#001d3b"/><stop offset="0.051" stop-color="#001e3c"/><stop offset="0.077" stop-color="#001e3c"/><stop offset="0.103" stop-color="#001e3c"/><stop offset="0.128" stop-color="#001e3d"/><stop offset="0.154" stop-color="#001f3e"/><stop offset="0.179" stop-color="#002041"/><stop offset="0.205" stop-color="#002247"/><stop offset="0.231" stop-color="#00254d"/><stop offset="0.256" stop-color="#002854"/><stop offset="0.282" stop-color="#002b59"/><stop offset="0.308" stop-color="#002e5d"/><stop offset="0.333" stop-color="#002f5e"/><stop offset="0.359" stop-color="#003363"/><stop offset="0.385" stop-color="#004079"/><stop offset="0.410" stop-color="#004684"/><stop offset="0.436" stop-color="#004e92"/><stop offset="0.462" stop-color="#0056a0"/><stop offset="0.487" stop-color="#005aa6"/><stop offset="0.513" stop-color="#005bac"/><stop offset="0.538" stop-color="#005cb1"/><stop offset="0.564" stop-color="#0060b8"/><stop offset="0.590" stop-color="#0067c3"/><stop offset="0.615" stop-color="#0070d0"/><stop offset="0.641" stop-color="#0179dc"/><stop offset="0.667" stop-color="#0283e8"/><stop offset="0.692" stop-color="#048cf2"/><stop offset="0.718" stop-color="#0695f9"/><stop offset="0.744" stop-color="#079afd"/><stop offset="0.769" stop-color="#069cfe"/><stop offset="0.795" stop-color="#049cfc"/><stop offset="0.821" stop-color="#0399f8"/><stop offset="0.846" stop-color="#0295f4"/><stop offset="0.872" stop-color="#0290ef"/><stop offset="0.897" stop-color="#028ae9"/><stop offset="0.923" stop-color="#0185e4"/><stop offset="0.949" stop-color="#017ede"/><stop offset="0.974" stop-color="#0078d9"/><stop offset="1.000" stop-color="#0075d8"/></linearGradient>
<linearGradient id="s27" gradientUnits="userSpaceOnUse" x1="-40" y1="0" x2="1520" y2="0"><stop offset="0.000" stop-color="#001b39"/><stop offset="0.026" stop-color="#001c3a"/><stop offset="0.051" stop-color="#001d3b"/><stop offset="0.077" stop-color="#001e3c"/><stop offset="0.103" stop-color="#001e3c"/><stop offset="0.128" stop-color="#001e3d"/><stop offset="0.154" stop-color="#001f3e"/><stop offset="0.179" stop-color="#002041"/><stop offset="0.205" stop-color="#002247"/><stop offset="0.231" stop-color="#00254d"/><stop offset="0.256" stop-color="#002854"/><stop offset="0.282" stop-color="#002c5a"/><stop offset="0.308" stop-color="#002e5f"/><stop offset="0.333" stop-color="#003163"/><stop offset="0.359" stop-color="#00396e"/><stop offset="0.385" stop-color="#004785"/><stop offset="0.410" stop-color="#005095"/><stop offset="0.436" stop-color="#0056a1"/><stop offset="0.462" stop-color="#005cab"/><stop offset="0.487" stop-color="#005eaf"/><stop offset="0.513" stop-color="#005fb3"/><stop offset="0.538" stop-color="#0061b8"/><stop offset="0.564" stop-color="#0064bf"/><stop offset="0.590" stop-color="#016bc9"/><stop offset="0.615" stop-color="#0173d4"/><stop offset="0.641" stop-color="#017ce0"/><stop offset="0.667" stop-color="#0385eb"/><stop offset="0.692" stop-color="#048ef4"/><stop offset="0.718" stop-color="#0696fa"/><stop offset="0.744" stop-color="#079bfe"/><stop offset="0.769" stop-color="#069cfe"/><stop offset="0.795" stop-color="#059bfc"/><stop offset="0.821" stop-color="#0498f8"/><stop offset="0.846" stop-color="#0393f3"/><stop offset="0.872" stop-color="#028ded"/><stop offset="0.897" stop-color="#0287e7"/><stop offset="0.923" stop-color="#0280e0"/><stop offset="0.949" stop-color="#0178d9"/><stop offset="0.974" stop-color="#0071d4"/><stop offset="1.000" stop-color="#006ed2"/></linearGradient>
<linearGradient id="s28" gradientUnits="userSpaceOnUse" x1="-40" y1="0" x2="1520" y2="0"><stop offset="0.000" stop-color="#001a38"/><stop offset="0.026" stop-color="#001c3a"/><stop offset="0.051" stop-color="#001d3b"/><stop offset="0.077" stop-color="#001d3b"/><stop offset="0.103" stop-color="#001e3c"/><stop offset="0.128" stop-color="#001e3d"/><stop offset="0.154" stop-color="#001f3f"/><stop offset="0.179" stop-color="#002042"/><stop offset="0.205" stop-color="#002248"/><stop offset="0.231" stop-color="#00254f"/><stop offset="0.256" stop-color="#002956"/><stop offset="0.282" stop-color="#002c5d"/><stop offset="0.308" stop-color="#003063"/><stop offset="0.333" stop-color="#00356b"/><stop offset="0.359" stop-color="#003e79"/><stop offset="0.385" stop-color="#004c8e"/><stop offset="0.410" stop-color="#0056a0"/><stop offset="0.436" stop-color="#005cab"/><stop offset="0.462" stop-color="#0060b4"/><stop offset="0.487" stop-color="#0062b8"/><stop offset="0.513" stop-color="#0063bb"/><stop offset="0.538" stop-color="#0065bf"/><stop offset="0.564" stop-color="#0168c6"/><stop offset="0.590" stop-color="#016ece"/><stop offset="0.615" stop-color="#0176d9"/><stop offset="0.641" stop-color="#027ee3"/><stop offset="0.667" stop-color="#0387ed"/><stop offset="0.692" stop-color="#058ff5"/><stop offset="0.718" stop-color="#0696fb"/><stop offset="0.744" stop-color="#079afe"/><stop offset="0.769" stop-color="#069cfe"/><stop offset="0.795" stop-color="#059afc"/><stop offset="0.821" stop-color="#0497f8"/><stop offset="0.846" stop-color="#0391f2"/><stop offset="0.872" stop-color="#038bec"/><stop offset="0.897" stop-color="#0284e5"/><stop offset="0.923" stop-color="#027cdd"/><stop offset="0.949" stop-color="#0174d6"/><stop offset="0.974" stop-color="#006dd1"/><stop offset="1.000" stop-color="#0069ce"/></linearGradient>
<linearGradient id="s29" gradientUnits="userSpaceOnUse" x1="-40" y1="0" x2="1520" y2="0"><stop offset="0.000" stop-color="#001a38"/><stop offset="0.026" stop-color="#001b3a"/><stop offset="0.051" stop-color="#001c3b"/><stop offset="0.077" stop-color="#001d3c"/><stop offset="0.103" stop-color="#001e3d"/><stop offset="0.128" stop-color="#001e3e"/><stop offset="0.154" stop-color="#001f40"/><stop offset="0.179" stop-color="#002144"/><stop offset="0.205" stop-color="#002349"/><stop offset="0.231" stop-color="#002650"/><stop offset="0.256" stop-color="#002a58"/><stop offset="0.282" stop-color="#002e60"/><stop offset="0.308" stop-color="#003368"/><stop offset="0.333" stop-color="#003973"/><stop offset="0.359" stop-color="#004382"/><stop offset="0.385" stop-color="#004f96"/><stop offset="0.410" stop-color="#0059a7"/><stop offset="0.436" stop-color="#0060b3"/><stop offset="0.462" stop-color="#0064ba"/><stop offset="0.487" stop-color="#0066bf"/><stop offset="0.513" stop-color="#0167c2"/><stop offset="0.538" stop-color="#0169c6"/><stop offset="0.564" stop-color="#016ccc"/><stop offset="0.590" stop-color="#0172d4"/><stop offset="0.615" stop-color="#0279dd"/><stop offset="0.641" stop-color="#0380e6"/><stop offset="0.667" stop-color="#0488ef"/><stop offset="0.692" stop-color="#058ff6"/><stop offset="0.718" stop-color="#0695fc"/><stop offset="0.744" stop-color="#0799fe"/><stop offset="0.769" stop-color="#069afe"/><stop offset="0.795" stop-color="#0698fb"/><stop offset="0.821" stop-color="#0594f7"/><stop offset="0.846" stop-color="#048ff1"/><stop offset="0.872" stop-color="#0388ea"/><stop offset="0.897" stop-color="#0381e3"/><stop offset="0.923" stop-color="#0278db"/><stop offset="0.949" stop-color="#0170d4"/><stop offset="0.974" stop-color="#006acf"/><stop offset="1.000" stop-color="#0065cc"/></linearGradient>
<linearGradient id="s30" gradientUnits="userSpaceOnUse" x1="560" y1="0" x2="1520" y2="0"><stop offset="0.000" stop-color="#00295a"/><stop offset="0.042" stop-color="#002c61"/><stop offset="0.083" stop-color="#002f69"/><stop offset="0.125" stop-color="#003473"/><stop offset="0.167" stop-color="#003679"/><stop offset="0.208" stop-color="#00357a"/><stop offset="0.250" stop-color="#003479"/><stop offset="0.292" stop-color="#003378"/><stop offset="0.333" stop-color="#003378"/><stop offset="0.375" stop-color="#00357c"/><stop offset="0.417" stop-color="#003a85"/><stop offset="0.458" stop-color="#00408e"/><stop offset="0.500" stop-color="#004597"/><stop offset="0.542" stop-color="#00499c"/><stop offset="0.583" stop-color="#004a9c"/><stop offset="0.625" stop-color="#004999"/><stop offset="0.667" stop-color="#004796"/><stop offset="0.708" stop-color="#004490"/><stop offset="0.750" stop-color="#00428d"/><stop offset="0.792" stop-color="#004695"/><stop offset="0.833" stop-color="#004da4"/><stop offset="0.875" stop-color="#0050ab"/><stop offset="0.917" stop-color="#0055b0"/><stop offset="0.958" stop-color="#005eb8"/><stop offset="1.000" stop-color="#0064bf"/></linearGradient>
<linearGradient id="s31" gradientUnits="userSpaceOnUse" x1="560" y1="0" x2="1520" y2="0"><stop offset="0.000" stop-color="#003164"/><stop offset="0.042" stop-color="#00346b"/><stop offset="0.083" stop-color="#003773"/><stop offset="0.125" stop-color="#003c7d"/><stop offset="0.167" stop-color="#003e83"/><stop offset="0.208" stop-color="#003e84"/><stop offset="0.250" stop-color="#003c83"/><stop offset="0.292" stop-color="#003b81"/><stop offset="0.333" stop-color="#003b82"/><stop offset="0.375" stop-color="#003d86"/><stop offset="0.417" stop-color="#00428f"/><stop offset="0.458" stop-color="#004899"/><stop offset="0.500" stop-color="#004ea2"/><stop offset="0.542" stop-color="#0053a8"/><stop offset="0.583" stop-color="#0053a8"/><stop offset="0.625" stop-color="#0052a4"/><stop offset="0.667" stop-color="#0050a1"/><stop offset="0.708" stop-color="#004c9b"/><stop offset="0.750" stop-color="#004a96"/><stop offset="0.792" stop-color="#004f9f"/><stop offset="0.833" stop-color="#0056af"/><stop offset="0.875" stop-color="#0058b5"/><stop offset="0.917" stop-color="#005cb7"/><stop offset="0.958" stop-color="#0065c0"/><stop offset="1.000" stop-color="#006cc7"/></linearGradient>
<linearGradient id="s32" gradientUnits="userSpaceOnUse" x1="560" y1="0" x2="1520" y2="0"><stop offset="0.000" stop-color="#00396e"/><stop offset="0.042" stop-color="#003c74"/><stop offset="0.083" stop-color="#00407c"/><stop offset="0.125" stop-color="#004487"/><stop offset="0.167" stop-color="#00468d"/><stop offset="0.208" stop-color="#00468e"/><stop offset="0.250" stop-color="#00448c"/><stop offset="0.292" stop-color="#00438b"/><stop offset="0.333" stop-color="#00428b"/><stop offset="0.375" stop-color="#00458f"/><stop offset="0.417" stop-color="#004a99"/><stop offset="0.458" stop-color="#0051a4"/><stop offset="0.500" stop-color="#0057ad"/><stop offset="0.542" stop-color="#005cb4"/><stop offset="0.583" stop-color="#005db4"/><stop offset="0.625" stop-color="#005bb0"/><stop offset="0.667" stop-color="#0059ad"/><stop offset="0.708" stop-color="#0055a7"/><stop offset="0.750" stop-color="#0052a0"/><stop offset="0.792" stop-color="#0057aa"/><stop offset="0.833" stop-color="#005eba"/><stop offset="0.875" stop-color="#005fbe"/><stop offset="0.917" stop-color="#0063bf"/><stop offset="0.958" stop-color="#006cc8"/><stop offset="1.000" stop-color="#0073cf"/></linearGradient>
<linearGradient id="s33" gradientUnits="userSpaceOnUse" x1="560" y1="0" x2="1520" y2="0"><stop offset="0.000" stop-color="#004177"/><stop offset="0.042" stop-color="#00447e"/><stop offset="0.083" stop-color="#004886"/><stop offset="0.125" stop-color="#004c90"/><stop offset="0.167" stop-color="#004f97"/><stop offset="0.208" stop-color="#004e97"/><stop offset="0.250" stop-color="#004c96"/><stop offset="0.292" stop-color="#004b94"/><stop offset="0.333" stop-color="#004a94"/><stop offset="0.375" stop-color="#004d99"/><stop offset="0.417" stop-color="#0052a3"/><stop offset="0.458" stop-color="#0059ae"/><stop offset="0.500" stop-color="#0060b9"/><stop offset="0.542" stop-color="#0065c0"/><stop offset="0.583" stop-color="#0066c0"/><stop offset="0.625" stop-color="#0064bb"/><stop offset="0.667" stop-color="#0062b9"/><stop offset="0.708" stop-color="#005db2"/><stop offset="0.750" stop-color="#005bab"/><stop offset="0.792" stop-color="#0061b5"/><stop offset="0.833" stop-color="#0068c6"/><stop offset="0.875" stop-color="#0067c7"/><stop offset="0.917" stop-color="#006ac6"/><stop offset="0.958" stop-color="#0073cf"/><stop offset="1.000" stop-color="#007bd6"/></linearGradient>
<linearGradient id="s34" gradientUnits="userSpaceOnUse" x1="560" y1="0" x2="1520" y2="0"><stop offset="0.000" stop-color="#004981"/><stop offset="0.042" stop-color="#004c88"/><stop offset="0.083" stop-color="#005090"/><stop offset="0.125" stop-color="#00549a"/><stop offset="0.167" stop-color="#0057a0"/><stop offset="0.208" stop-color="#0056a1"/><stop offset="0.250" stop-color="#0054a0"/><stop offset="0.292" stop-color="#00539e"/><stop offset="0.333" stop-color="#00529e"/><stop offset="0.375" stop-color="#0055a3"/><stop offset="0.417" stop-color="#005bad"/><stop offset="0.458" stop-color="#0062b9"/><stop offset="0.500" stop-color="#0069c4"/><stop offset="0.542" stop-color="#006ecb"/><stop offset="0.583" stop-color="#006fcc"/><stop offset="0.625" stop-color="#006dc7"/><stop offset="0.667" stop-color="#006ac5"/><stop offset="0.708" stop-color="#0066be"/><stop offset="0.750" stop-color="#0064b7"/><stop offset="0.792" stop-color="#006ac0"/><stop offset="0.833" stop-color="#0071d2"/><stop offset="0.875" stop-color="#006ed1"/><stop offset="0.917" stop-color="#0070cd"/><stop offset="0.958" stop-color="#007ad6"/><stop offset="1.000" stop-color="#0082dd"/></linearGradient>
<linearGradient id="s35" gradientUnits="userSpaceOnUse" x1="560" y1="0" x2="1520" y2="0"><stop offset="0.000" stop-color="#00518a"/><stop offset="0.042" stop-color="#005491"/><stop offset="0.083" stop-color="#005899"/><stop offset="0.125" stop-color="#005ca3"/><stop offset="0.167" stop-color="#005ea9"/><stop offset="0.208" stop-color="#005eaa"/><stop offset="0.250" stop-color="#005ca9"/><stop offset="0.292" stop-color="#005ba8"/><stop offset="0.333" stop-color="#005ba8"/><stop offset="0.375" stop-color="#005dad"/><stop offset="0.417" stop-color="#0063b7"/><stop offset="0.458" stop-color="#006ac3"/><stop offset="0.500" stop-color="#0071ce"/><stop offset="0.542" stop-color="#0077d7"/><stop offset="0.583" stop-color="#0078d8"/><stop offset="0.625" stop-color="#0076d3"/><stop offset="0.667" stop-color="#0073d0"/><stop offset="0.708" stop-color="#006fca"/><stop offset="0.750" stop-color="#006dc3"/><stop offset="0.792" stop-color="#0073cc"/><stop offset="0.833" stop-color="#007adc"/><stop offset="0.875" stop-color="#0076d9"/><stop offset="0.917" stop-color="#0077d4"/><stop offset="0.958" stop-color="#0081dc"/><stop offset="1.000" stop-color="#0089e4"/></linearGradient>
<linearGradient id="s36" gradientUnits="userSpaceOnUse" x1="560" y1="0" x2="1520" y2="0"><stop offset="0.000" stop-color="#005994"/><stop offset="0.042" stop-color="#005d9b"/><stop offset="0.083" stop-color="#0060a3"/><stop offset="0.125" stop-color="#0064ac"/><stop offset="0.167" stop-color="#0066b2"/><stop offset="0.208" stop-color="#0066b4"/><stop offset="0.250" stop-color="#0065b3"/><stop offset="0.292" stop-color="#0063b2"/><stop offset="0.333" stop-color="#0063b2"/><stop offset="0.375" stop-color="#0066b7"/><stop offset="0.417" stop-color="#006cc2"/><stop offset="0.458" stop-color="#0073ce"/><stop offset="0.500" stop-color="#007ad9"/><stop offset="0.542" stop-color="#0080e2"/><stop offset="0.583" stop-color="#0081e4"/><stop offset="0.625" stop-color="#007edf"/><stop offset="0.667" stop-color="#007cdc"/><stop offset="0.708" stop-color="#0077d6"/><stop offset="0.750" stop-color="#0076cf"/><stop offset="0.792" stop-color="#007dd7"/><stop offset="0.833" stop-color="#0082e6"/><stop offset="0.875" stop-color="#007de2"/><stop offset="0.917" stop-color="#007fdc"/><stop offset="0.958" stop-color="#0088e3"/><stop offset="1.000" stop-color="#0090eb"/></linearGradient>
<linearGradient id="s37" gradientUnits="userSpaceOnUse" x1="560" y1="0" x2="1520" y2="0"><stop offset="0.000" stop-color="#00629e"/><stop offset="0.042" stop-color="#0065a5"/><stop offset="0.083" stop-color="#0068ad"/><stop offset="0.125" stop-color="#006cb6"/><stop offset="0.167" stop-color="#006ebb"/><stop offset="0.208" stop-color="#006ebd"/><stop offset="0.250" stop-color="#006dbc"/><stop offset="0.292" stop-color="#006cbc"/><stop offset="0.333" stop-color="#006bbc"/><stop offset="0.375" stop-color="#006ec1"/><stop offset="0.417" stop-color="#0074cc"/><stop offset="0.458" stop-color="#007bd8"/><stop offset="0.500" stop-color="#0082e4"/><stop offset="0.542" stop-color="#0088ec"/><stop offset="0.583" stop-color="#008aee"/><stop offset="0.625" stop-color="#0087ea"/><stop offset="0.667" stop-color="#0084e7"/><stop offset="0.708" stop-color="#0080e1"/><stop offset="0.750" stop-color="#007fdb"/><stop offset="0.792" stop-color="#0085e1"/><stop offset="0.833" stop-color="#0089ee"/><stop offset="0.875" stop-color="#0084e9"/><stop offset="0.917" stop-color="#0086e3"/><stop offset="0.958" stop-color="#008fe9"/><stop offset="1.000" stop-color="#0097f2"/></linearGradient>
<linearGradient id="s38" gradientUnits="userSpaceOnUse" x1="560" y1="0" x2="1520" y2="0"><stop offset="0.000" stop-color="#006aa8"/><stop offset="0.042" stop-color="#006daf"/><stop offset="0.083" stop-color="#0070b7"/><stop offset="0.125" stop-color="#0074bf"/><stop offset="0.167" stop-color="#0076c4"/><stop offset="0.208" stop-color="#0076c6"/><stop offset="0.250" stop-color="#0075c6"/><stop offset="0.292" stop-color="#0074c5"/><stop offset="0.333" stop-color="#0074c7"/><stop offset="0.375" stop-color="#0077cc"/><stop offset="0.417" stop-color="#007dd6"/><stop offset="0.458" stop-color="#0084e2"/><stop offset="0.500" stop-color="#008bee"/><stop offset="0.542" stop-color="#0090f6"/><stop offset="0.583" stop-color="#0092f9"/><stop offset="0.625" stop-color="#0090f5"/><stop offset="0.667" stop-color="#008df1"/><stop offset="0.708" stop-color="#0089ed"/><stop offset="0.750" stop-color="#0089e6"/><stop offset="0.792" stop-color="#008eea"/><stop offset="0.833" stop-color="#0091f5"/><stop offset="0.875" stop-color="#008cf0"/><stop offset="0.917" stop-color="#008eea"/><stop offset="0.958" stop-color="#0096f0"/><stop offset="1.000" stop-color="#009ef9"/></linearGradient>
<linearGradient id="s39" gradientUnits="userSpaceOnUse" x1="560" y1="0" x2="1520" y2="0"><stop offset="0.000" stop-color="#0072b1"/><stop offset="0.042" stop-color="#0075b8"/><stop offset="0.083" stop-color="#0079c0"/><stop offset="0.125" stop-color="#007cc8"/><stop offset="0.167" stop-color="#007ecd"/><stop offset="0.208" stop-color="#007ecf"/><stop offset="0.250" stop-color="#007dd0"/><stop offset="0.292" stop-color="#007cd0"/><stop offset="0.333" stop-color="#007dd1"/><stop offset="0.375" stop-color="#0080d7"/><stop offset="0.417" stop-color="#0085e1"/><stop offset="0.458" stop-color="#008ced"/><stop offset="0.500" stop-color="#0093f8"/><stop offset="0.542" stop-color="#0098ff"/><stop offset="0.583" stop-color="#009aff"/><stop offset="0.625" stop-color="#0098ff"/><stop offset="0.667" stop-color="#0095fc"/><stop offset="0.708" stop-color="#0092f7"/><stop offset="0.750" stop-color="#0092f0"/><stop offset="0.792" stop-color="#0096f3"/><stop offset="0.833" stop-color="#0098fb"/><stop offset="0.875" stop-color="#0094f7"/><stop offset="0.917" stop-color="#0096f1"/><stop offset="0.958" stop-color="#009df8"/><stop offset="1.000" stop-color="#00a5ff"/></linearGradient>
<linearGradient id="s40" gradientUnits="userSpaceOnUse" x1="560" y1="0" x2="1520" y2="0"><stop offset="0.000" stop-color="#007abb"/><stop offset="0.042" stop-color="#007dc2"/><stop offset="0.083" stop-color="#0081ca"/><stop offset="0.125" stop-color="#0084d1"/><stop offset="0.167" stop-color="#0085d6"/><stop offset="0.208" stop-color="#0086d9"/><stop offset="0.250" stop-color="#0085d9"/><stop offset="0.292" stop-color="#0085da"/><stop offset="0.333" stop-color="#0085dc"/><stop offset="0.375" stop-color="#0088e1"/><stop offset="0.417" stop-color="#008eeb"/><stop offset="0.458" stop-color="#0094f7"/><stop offset="0.500" stop-color="#009bff"/><stop offset="0.542" stop-color="#00a0ff"/><stop offset="0.583" stop-color="#00a2ff"/><stop offset="0.625" stop-color="#00a0ff"/><stop offset="0.667" stop-color="#009dff"/><stop offset="0.708" stop-color="#009aff"/><stop offset="0.750" stop-color="#009bfa"/><stop offset="0.792" stop-color="#009efc"/><stop offset="0.833" stop-color="#009fff"/><stop offset="0.875" stop-color="#009dfe"/><stop offset="0.917" stop-color="#009ef9"/><stop offset="0.958" stop-color="#00a5ff"/><stop offset="1.000" stop-color="#00acff"/></linearGradient>
<linearGradient id="s41" gradientUnits="userSpaceOnUse" x1="560" y1="0" x2="1520" y2="0"><stop offset="0.000" stop-color="#0082c5"/><stop offset="0.042" stop-color="#0085cc"/><stop offset="0.083" stop-color="#0089d3"/><stop offset="0.125" stop-color="#008bda"/><stop offset="0.167" stop-color="#008ddf"/><stop offset="0.208" stop-color="#008ee2"/><stop offset="0.250" stop-color="#008de3"/><stop offset="0.292" stop-color="#008de4"/><stop offset="0.333" stop-color="#008ee6"/><stop offset="0.375" stop-color="#0091ec"/><stop offset="0.417" stop-color="#0096f5"/><stop offset="0.458" stop-color="#009dff"/><stop offset="0.500" stop-color="#00a3ff"/><stop offset="0.542" stop-color="#00a8ff"/><stop offset="0.583" stop-color="#00aaff"/><stop offset="0.625" stop-color="#00a9ff"/><stop offset="0.667" stop-color="#00a6ff"/><stop offset="0.708" stop-color="#00a3ff"/><stop offset="0.750" stop-color="#00a3ff"/><stop offset="0.792" stop-color="#00a6ff"/><stop offset="0.833" stop-color="#00a7ff"/><stop offset="0.875" stop-color="#00a5ff"/><stop offset="0.917" stop-color="#00a7ff"/><stop offset="0.958" stop-color="#00adff"/><stop offset="1.000" stop-color="#00b4ff"/></linearGradient>
<linearGradient id="s42" gradientUnits="userSpaceOnUse" x1="560" y1="0" x2="1520" y2="0"><stop offset="0.000" stop-color="#008ace"/><stop offset="0.042" stop-color="#008dd5"/><stop offset="0.083" stop-color="#0091dc"/><stop offset="0.125" stop-color="#0093e3"/><stop offset="0.167" stop-color="#0095e8"/><stop offset="0.208" stop-color="#0096eb"/><stop offset="0.250" stop-color="#0096ec"/><stop offset="0.292" stop-color="#0096ee"/><stop offset="0.333" stop-color="#0097f1"/><stop offset="0.375" stop-color="#009af7"/><stop offset="0.417" stop-color="#009fff"/><stop offset="0.458" stop-color="#00a5ff"/><stop offset="0.500" stop-color="#00abff"/><stop offset="0.542" stop-color="#00b0ff"/><stop offset="0.583" stop-color="#00b2ff"/><stop offset="0.625" stop-color="#00b1ff"/><stop offset="0.667" stop-color="#00aeff"/><stop offset="0.708" stop-color="#00acff"/><stop offset="0.750" stop-color="#00acff"/><stop offset="0.792" stop-color="#00aeff"/><stop offset="0.833" stop-color="#00afff"/><stop offset="0.875" stop-color="#00adff"/><stop offset="0.917" stop-color="#00afff"/><stop offset="0.958" stop-color="#00b5ff"/><stop offset="1.000" stop-color="#00bbff"/></linearGradient>
<linearGradient id="s43" gradientUnits="userSpaceOnUse" x1="560" y1="0" x2="1520" y2="0"><stop offset="0.000" stop-color="#0092d8"/><stop offset="0.042" stop-color="#0095df"/><stop offset="0.083" stop-color="#0099e6"/><stop offset="0.125" stop-color="#009bec"/><stop offset="0.167" stop-color="#009df1"/><stop offset="0.208" stop-color="#009ef4"/><stop offset="0.250" stop-color="#009ef6"/><stop offset="0.292" stop-color="#009ef8"/><stop offset="0.333" stop-color="#009ffb"/><stop offset="0.375" stop-color="#00a2ff"/><stop offset="0.417" stop-color="#00a7ff"/><stop offset="0.458" stop-color="#00adff"/><stop offset="0.500" stop-color="#00b3ff"/><stop offset="0.542" stop-color="#00b8ff"/><stop offset="0.583" stop-color="#00baff"/><stop offset="0.625" stop-color="#00b9ff"/><stop offset="0.667" stop-color="#00b7ff"/><stop offset="0.708" stop-color="#00b5ff"/><stop offset="0.750" stop-color="#00b5ff"/><stop offset="0.792" stop-color="#00b6ff"/><stop offset="0.833" stop-color="#00b7ff"/><stop offset="0.875" stop-color="#00b6ff"/><stop offset="0.917" stop-color="#00b7ff"/><stop offset="0.958" stop-color="#00bdff"/><stop offset="1.000" stop-color="#00c3ff"/></linearGradient>
<linearGradient id="s44" gradientUnits="userSpaceOnUse" x1="400" y1="0" x2="1520" y2="0"><stop offset="0.000" stop-color="#005c92"/><stop offset="0.036" stop-color="#005e97"/><stop offset="0.071" stop-color="#00609c"/><stop offset="0.107" stop-color="#0062a0"/><stop offset="0.143" stop-color="#0063a4"/><stop offset="0.179" stop-color="#0064a7"/><stop offset="0.214" stop-color="#0065a9"/><stop offset="0.250" stop-color="#0067ab"/><stop offset="0.286" stop-color="#0068af"/><stop offset="0.321" stop-color="#006bb4"/><stop offset="0.357" stop-color="#006eba"/><stop offset="0.393" stop-color="#0072c1"/><stop offset="0.429" stop-color="#0077ca"/><stop offset="0.464" stop-color="#007dd5"/><stop offset="0.500" stop-color="#0085e2"/><stop offset="0.536" stop-color="#008def"/><stop offset="0.571" stop-color="#0094fb"/><stop offset="0.607" stop-color="#009aff"/><stop offset="0.643" stop-color="#00a0ff"/><stop offset="0.679" stop-color="#00a3ff"/><stop offset="0.714" stop-color="#00a2ff"/><stop offset="0.750" stop-color="#0099ff"/><stop offset="0.786" stop-color="#008ef5"/><stop offset="0.821" stop-color="#0085e9"/><stop offset="0.857" stop-color="#0082e6"/><stop offset="0.893" stop-color="#0083e8"/><stop offset="0.929" stop-color="#0085e9"/><stop offset="0.964" stop-color="#0085e9"/><stop offset="1.000" stop-color="#0088eb"/></linearGradient>
<linearGradient id="s45" gradientUnits="userSpaceOnUse" x1="400" y1="0" x2="1520" y2="0"><stop offset="0.000" stop-color="#00568a"/><stop offset="0.036" stop-color="#00588f"/><stop offset="0.071" stop-color="#005a94"/><stop offset="0.107" stop-color="#005c98"/><stop offset="0.143" stop-color="#005d9c"/><stop offset="0.179" stop-color="#005e9e"/><stop offset="0.214" stop-color="#005fa0"/><stop offset="0.250" stop-color="#0060a3"/><stop offset="0.286" stop-color="#0062a6"/><stop offset="0.321" stop-color="#0065ab"/><stop offset="0.357" stop-color="#0068b0"/><stop offset="0.393" stop-color="#006bb8"/><stop offset="0.429" stop-color="#0070c0"/><stop offset="0.464" stop-color="#0076cc"/><stop offset="0.500" stop-color="#007ed9"/><stop offset="0.536" stop-color="#0086e6"/><stop offset="0.571" stop-color="#008df2"/><stop offset="0.607" stop-color="#0093fb"/><stop offset="0.643" stop-color="#0099ff"/><stop offset="0.679" stop-color="#009cff"/><stop offset="0.714" stop-color="#009cff"/><stop offset="0.750" stop-color="#0093fc"/><stop offset="0.786" stop-color="#0088ec"/><stop offset="0.821" stop-color="#007fe1"/><stop offset="0.857" stop-color="#007de0"/><stop offset="0.893" stop-color="#0080e4"/><stop offset="0.929" stop-color="#0081e5"/><stop offset="0.964" stop-color="#0082e4"/><stop offset="1.000" stop-color="#0084e7"/></linearGradient>
<linearGradient id="s46" gradientUnits="userSpaceOnUse" x1="400" y1="0" x2="1520" y2="0"><stop offset="0.000" stop-color="#005082"/><stop offset="0.036" stop-color="#005287"/><stop offset="0.071" stop-color="#00548c"/><stop offset="0.107" stop-color="#005690"/><stop offset="0.143" stop-color="#005794"/><stop offset="0.179" stop-color="#005996"/><stop offset="0.214" stop-color="#005998"/><stop offset="0.250" stop-color="#005a9a"/><stop offset="0.286" stop-color="#005c9d"/><stop offset="0.321" stop-color="#005ea2"/><stop offset="0.357" stop-color="#0061a7"/><stop offset="0.393" stop-color="#0065ae"/><stop offset="0.429" stop-color="#0069b7"/><stop offset="0.464" stop-color="#006fc2"/><stop offset="0.500" stop-color="#0077d0"/><stop offset="0.536" stop-color="#007fdd"/><stop offset="0.571" stop-color="#0086e8"/><stop offset="0.607" stop-color="#008cf1"/><stop offset="0.643" stop-color="#0091f9"/><stop offset="0.679" stop-color="#0095ff"/><stop offset="0.714" stop-color="#0095ff"/><stop offset="0.750" stop-color="#008cf2"/><stop offset="0.786" stop-color="#0082e4"/><stop offset="0.821" stop-color="#007ada"/><stop offset="0.857" stop-color="#0079da"/><stop offset="0.893" stop-color="#007de0"/><stop offset="0.929" stop-color="#007ee1"/><stop offset="0.964" stop-color="#007fe0"/><stop offset="1.000" stop-color="#0081e3"/></linearGradient>
<linearGradient id="s47" gradientUnits="userSpaceOnUse" x1="400" y1="0" x2="1520" y2="0"><stop offset="0.000" stop-color="#004a7a"/><stop offset="0.036" stop-color="#004c7f"/><stop offset="0.071" stop-color="#004e84"/><stop offset="0.107" stop-color="#005089"/><stop offset="0.143" stop-color="#00528c"/><stop offset="0.179" stop-color="#00538e"/><stop offset="0.214" stop-color="#005390"/><stop offset="0.250" stop-color="#005391"/><stop offset="0.286" stop-color="#005594"/><stop offset="0.321" stop-color="#005899"/><stop offset="0.357" stop-color="#005b9e"/><stop offset="0.393" stop-color="#005ea5"/><stop offset="0.429" stop-color="#0062ad"/><stop offset="0.464" stop-color="#0068b8"/><stop offset="0.500" stop-color="#0070c6"/><stop offset="0.536" stop-color="#0078d3"/><stop offset="0.571" stop-color="#007fde"/><stop offset="0.607" stop-color="#0085e7"/><stop offset="0.643" stop-color="#0089ee"/><stop offset="0.679" stop-color="#008df3"/><stop offset="0.714" stop-color="#008ef4"/><stop offset="0.750" stop-color="#0085e7"/><stop offset="0.786" stop-color="#007cdb"/><stop offset="0.821" stop-color="#0075d3"/><stop offset="0.857" stop-color="#0076d6"/><stop offset="0.893" stop-color="#007add"/><stop offset="0.929" stop-color="#007cde"/><stop offset="0.964" stop-color="#007cdc"/><stop offset="1.000" stop-color="#007edf"/></linearGradient>
<linearGradient id="s48" gradientUnits="userSpaceOnUse" x1="400" y1="0" x2="1520" y2="0"><stop offset="0.000" stop-color="#004472"/><stop offset="0.036" stop-color="#004677"/><stop offset="0.071" stop-color="#00487c"/><stop offset="0.107" stop-color="#004a81"/><stop offset="0.143" stop-color="#004c84"/><stop offset="0.179" stop-color="#004d86"/><stop offset="0.214" stop-color="#004d87"/><stop offset="0.250" stop-color="#004d88"/><stop offset="0.286" stop-color="#004f8b"/><stop offset="0.321" stop-color="#005290"/><stop offset="0.357" stop-color="#005495"/><stop offset="0.393" stop-color="#00579b"/><stop offset="0.429" stop-color="#005ba4"/><stop offset="0.464" stop-color="#0061af"/><stop offset="0.500" stop-color="#0069bd"/><stop offset="0.536" stop-color="#0072ca"/><stop offset="0.571" stop-color="#0078d5"/><stop offset="0.607" stop-color="#007ddd"/><stop offset="0.643" stop-color="#0081e2"/><stop offset="0.679" stop-color="#0084e6"/><stop offset="0.714" stop-color="#0084e7"/><stop offset="0.750" stop-color="#007cdb"/><stop offset="0.786" stop-color="#0075d1"/><stop offset="0.821" stop-color="#0071cd"/><stop offset="0.857" stop-color="#0073d2"/><stop offset="0.893" stop-color="#0078db"/><stop offset="0.929" stop-color="#007adc"/><stop offset="0.964" stop-color="#0079d9"/><stop offset="1.000" stop-color="#007bdc"/></linearGradient>
<linearGradient id="s49" gradientUnits="userSpaceOnUse" x1="400" y1="0" x2="1520" y2="0"><stop offset="0.000" stop-color="#003e6a"/><stop offset="0.036" stop-color="#00406f"/><stop offset="0.071" stop-color="#004274"/><stop offset="0.107" stop-color="#004479"/><stop offset="0.143" stop-color="#00467d"/><stop offset="0.179" stop-color="#00477e"/><stop offset="0.214" stop-color="#00477f"/><stop offset="0.250" stop-color="#004780"/><stop offset="0.286" stop-color="#004883"/><stop offset="0.321" stop-color="#004b87"/><stop offset="0.357" stop-color="#004e8c"/><stop offset="0.393" stop-color="#005192"/><stop offset="0.429" stop-color="#00549a"/><stop offset="0.464" stop-color="#005aa5"/><stop offset="0.500" stop-color="#0063b3"/><stop offset="0.536" stop-color="#006bc0"/><stop offset="0.571" stop-color="#0071cb"/><stop offset="0.607" stop-color="#0076d2"/><stop offset="0.643" stop-color="#0079d6"/><stop offset="0.679" stop-color="#007ad8"/><stop offset="0.714" stop-color="#0079d7"/><stop offset="0.750" stop-color="#0073ce"/><stop offset="0.786" stop-color="#006fc8"/><stop offset="0.821" stop-color="#006dc7"/><stop offset="0.857" stop-color="#0070ce"/><stop offset="0.893" stop-color="#0076d8"/><stop offset="0.929" stop-color="#0078da"/><stop offset="0.964" stop-color="#0077d8"/><stop offset="1.000" stop-color="#0079da"/></linearGradient>
<linearGradient id="s50" gradientUnits="userSpaceOnUse" x1="400" y1="0" x2="1520" y2="0"><stop offset="0.000" stop-color="#003961"/><stop offset="0.036" stop-color="#003b67"/><stop offset="0.071" stop-color="#003d6c"/><stop offset="0.107" stop-color="#003f71"/><stop offset="0.143" stop-color="#004075"/><stop offset="0.179" stop-color="#004176"/><stop offset="0.214" stop-color="#004177"/><stop offset="0.250" stop-color="#004077"/><stop offset="0.286" stop-color="#00427a"/><stop offset="0.321" stop-color="#00457e"/><stop offset="0.357" stop-color="#004883"/><stop offset="0.393" stop-color="#004a89"/><stop offset="0.429" stop-color="#004d91"/><stop offset="0.464" stop-color="#00539c"/><stop offset="0.500" stop-color="#005caa"/><stop offset="0.536" stop-color="#0064b7"/><stop offset="0.571" stop-color="#006ac0"/><stop offset="0.607" stop-color="#006ec6"/><stop offset="0.643" stop-color="#0070ca"/><stop offset="0.679" stop-color="#0070ca"/><stop offset="0.714" stop-color="#006dc5"/><stop offset="0.750" stop-color="#006ac1"/><stop offset="0.786" stop-color="#0068bf"/><stop offset="0.821" stop-color="#0069c1"/><stop offset="0.857" stop-color="#006dca"/><stop offset="0.893" stop-color="#0073d5"/><stop offset="0.929" stop-color="#0076d8"/><stop offset="0.964" stop-color="#0076d7"/><stop offset="1.000" stop-color="#0077d8"/></linearGradient>
<linearGradient id="s51" gradientUnits="userSpaceOnUse" x1="400" y1="0" x2="1520" y2="0"><stop offset="0.000" stop-color="#003359"/><stop offset="0.036" stop-color="#00355e"/><stop offset="0.071" stop-color="#003764"/><stop offset="0.107" stop-color="#003969"/><stop offset="0.143" stop-color="#003a6d"/><stop offset="0.179" stop-color="#003b6e"/><stop offset="0.214" stop-color="#003b6e"/><stop offset="0.250" stop-color="#003a6e"/><stop offset="0.286" stop-color="#003c71"/><stop offset="0.321" stop-color="#003f76"/><stop offset="0.357" stop-color="#00417b"/><stop offset="0.393" stop-color="#004480"/><stop offset="0.429" stop-color="#004787"/><stop offset="0.464" stop-color="#004d92"/><stop offset="0.500" stop-color="#0055a0"/><stop offset="0.536" stop-color="#005dad"/><stop offset="0.571" stop-color="#0062b6"/><stop offset="0.607" stop-color="#0066bb"/><stop offset="0.643" stop-color="#0067bd"/><stop offset="0.679" stop-color="#0066bc"/><stop offset="0.714" stop-color="#0061b5"/><stop offset="0.750" stop-color="#0061b4"/><stop offset="0.786" stop-color="#0062b5"/><stop offset="0.821" stop-color="#0064ba"/><stop offset="0.857" stop-color="#0069c5"/><stop offset="0.893" stop-color="#0071d1"/><stop offset="0.929" stop-color="#0074d6"/><stop offset="0.964" stop-color="#0075d7"/><stop offset="1.000" stop-color="#0075d6"/></linearGradient>
<linearGradient id="s52" gradientUnits="userSpaceOnUse" x1="400" y1="0" x2="1520" y2="0"><stop offset="0.000" stop-color="#002d51"/><stop offset="0.036" stop-color="#002f56"/><stop offset="0.071" stop-color="#00315c"/><stop offset="0.107" stop-color="#003361"/><stop offset="0.143" stop-color="#003465"/><stop offset="0.179" stop-color="#003566"/><stop offset="0.214" stop-color="#003566"/><stop offset="0.250" stop-color="#003366"/><stop offset="0.286" stop-color="#003569"/><stop offset="0.321" stop-color="#00396d"/><stop offset="0.357" stop-color="#003b72"/><stop offset="0.393" stop-color="#003d77"/><stop offset="0.429" stop-color="#00417f"/><stop offset="0.464" stop-color="#004689"/><stop offset="0.500" stop-color="#004e97"/><stop offset="0.536" stop-color="#0056a3"/><stop offset="0.571" stop-color="#005bab"/><stop offset="0.607" stop-color="#005db0"/><stop offset="0.643" stop-color="#005eb1"/><stop offset="0.679" stop-color="#005cae"/><stop offset="0.714" stop-color="#0058a7"/><stop offset="0.750" stop-color="#0059a8"/><stop offset="0.786" stop-color="#005cac"/><stop offset="0.821" stop-color="#0060b4"/><stop offset="0.857" stop-color="#0066c0"/><stop offset="0.893" stop-color="#006dcc"/><stop offset="0.929" stop-color="#0072d3"/><stop offset="0.964" stop-color="#0074d6"/><stop offset="1.000" stop-color="#0073d4"/></linearGradient>
<linearGradient id="s53" gradientUnits="userSpaceOnUse" x1="400" y1="0" x2="1520" y2="0"><stop offset="0.000" stop-color="#002749"/><stop offset="0.036" stop-color="#00294e"/><stop offset="0.071" stop-color="#002b54"/><stop offset="0.107" stop-color="#002d59"/><stop offset="0.143" stop-color="#002e5d"/><stop offset="0.179" stop-color="#002f5e"/><stop offset="0.214" stop-color="#002f5e"/><stop offset="0.250" stop-color="#002d5d"/><stop offset="0.286" stop-color="#002f60"/><stop offset="0.321" stop-color="#003365"/><stop offset="0.357" stop-color="#003569"/><stop offset="0.393" stop-color="#00376f"/><stop offset="0.429" stop-color="#003a76"/><stop offset="0.464" stop-color="#004080"/><stop offset="0.500" stop-color="#00478d"/><stop offset="0.536" stop-color="#004e99"/><stop offset="0.571" stop-color="#0053a1"/><stop offset="0.607" stop-color="#0055a5"/><stop offset="0.643" stop-color="#0056a5"/><stop offset="0.679" stop-color="#0053a1"/><stop offset="0.714" stop-color="#004f9b"/><stop offset="0.750" stop-color="#00519d"/><stop offset="0.786" stop-color="#0056a4"/><stop offset="0.821" stop-color="#005bad"/><stop offset="0.857" stop-color="#0062ba"/><stop offset="0.893" stop-color="#0069c7"/><stop offset="0.929" stop-color="#006fcf"/><stop offset="0.964" stop-color="#0071d2"/><stop offset="1.000" stop-color="#0070d1"/></linearGradient>
<linearGradient id="s54" gradientUnits="userSpaceOnUse" x1="400" y1="0" x2="1520" y2="0"><stop offset="0.000" stop-color="#002141"/><stop offset="0.036" stop-color="#002346"/><stop offset="0.071" stop-color="#00254c"/><stop offset="0.107" stop-color="#002751"/><stop offset="0.143" stop-color="#002955"/><stop offset="0.179" stop-color="#002956"/><stop offset="0.214" stop-color="#002956"/><stop offset="0.250" stop-color="#002755"/><stop offset="0.286" stop-color="#002958"/><stop offset="0.321" stop-color="#002c5c"/><stop offset="0.357" stop-color="#002f61"/><stop offset="0.393" stop-color="#003166"/><stop offset="0.429" stop-color="#00346d"/><stop offset="0.464" stop-color="#003978"/><stop offset="0.500" stop-color="#004084"/><stop offset="0.536" stop-color="#00478f"/><stop offset="0.571" stop-color="#004b96"/><stop offset="0.607" stop-color="#004e99"/><stop offset="0.643" stop-color="#004d99"/><stop offset="0.679" stop-color="#004b96"/><stop offset="0.714" stop-color="#004891"/><stop offset="0.750" stop-color="#004a94"/><stop offset="0.786" stop-color="#00509b"/><stop offset="0.821" stop-color="#0056a6"/><stop offset="0.857" stop-color="#005eb4"/><stop offset="0.893" stop-color="#0065c1"/><stop offset="0.929" stop-color="#006bca"/><stop offset="0.964" stop-color="#006ece"/><stop offset="1.000" stop-color="#006dce"/></linearGradient>
<linearGradient id="s55" gradientUnits="userSpaceOnUse" x1="400" y1="0" x2="1520" y2="0"><stop offset="0.000" stop-color="#001b39"/><stop offset="0.036" stop-color="#001d3e"/><stop offset="0.071" stop-color="#001f43"/><stop offset="0.107" stop-color="#002149"/><stop offset="0.143" stop-color="#00224d"/><stop offset="0.179" stop-color="#00234e"/><stop offset="0.214" stop-color="#00234d"/><stop offset="0.250" stop-color="#00224d"/><stop offset="0.286" stop-color="#002350"/><stop offset="0.321" stop-color="#002654"/><stop offset="0.357" stop-color="#002858"/><stop offset="0.393" stop-color="#002b5e"/><stop offset="0.429" stop-color="#002e65"/><stop offset="0.464" stop-color="#00336f"/><stop offset="0.500" stop-color="#003a7a"/><stop offset="0.536" stop-color="#004085"/><stop offset="0.571" stop-color="#00448b"/><stop offset="0.607" stop-color="#00468e"/><stop offset="0.643" stop-color="#00458e"/><stop offset="0.679" stop-color="#00438b"/><stop offset="0.714" stop-color="#004187"/><stop offset="0.750" stop-color="#00448b"/><stop offset="0.786" stop-color="#004a93"/><stop offset="0.821" stop-color="#00519f"/><stop offset="0.857" stop-color="#0059ae"/><stop offset="0.893" stop-color="#0061bb"/><stop offset="0.929" stop-color="#0067c5"/><stop offset="0.964" stop-color="#006ac9"/><stop offset="1.000" stop-color="#006ac9"/></linearGradient>
</defs>
<g filter="url(#fbv)">
<rect x="-40" y="-48" width="1560" height="24" fill="url(#s0)"/>
<rect x="-40" y="-24" width="1560" height="24" fill="url(#s1)"/>
<rect x="-40" y="0" width="1560" height="24" fill="url(#s2)"/>
<rect x="-40" y="24" width="1560" height="24" fill="url(#s3)"/>
<rect x="-40" y="48" width="1560" height="24" fill="url(#s4)"/>
<rect x="-40" y="72" width="1560" height="24" fill="url(#s5)"/>
<rect x="-40" y="96" width="1560" height="24" fill="url(#s6)"/>
<rect x="-40" y="120" width="1560" height="24" fill="url(#s7)"/>
<rect x="-40" y="144" width="1560" height="24" fill="url(#s8)"/>
<rect x="-40" y="168" width="1560" height="24" fill="url(#s9)"/>
<rect x="-40" y="192" width="1560" height="24" fill="url(#s10)"/>
<rect x="-40" y="216" width="1560" height="24" fill="url(#s11)"/>
<rect x="-40" y="240" width="1560" height="24" fill="url(#s12)"/>
<rect x="-40" y="264" width="1560" height="24" fill="url(#s13)"/>
<rect x="-40" y="288" width="1560" height="24" fill="url(#s14)"/>
<rect x="-40" y="312" width="1560" height="24" fill="url(#s15)"/>
<rect x="-40" y="336" width="1560" height="24" fill="url(#s16)"/>
<rect x="-40" y="360" width="1560" height="24" fill="url(#s17)"/>
<rect x="-40" y="384" width="1560" height="24" fill="url(#s18)"/>
<rect x="-40" y="408" width="1560" height="24" fill="url(#s19)"/>
<rect x="-40" y="432" width="1560" height="24" fill="url(#s20)"/>
<rect x="-40" y="456" width="1560" height="24" fill="url(#s21)"/>
<rect x="-40" y="480" width="1560" height="24" fill="url(#s22)"/>
<rect x="-40" y="504" width="1560" height="24" fill="url(#s23)"/>
<rect x="-40" y="528" width="1560" height="24" fill="url(#s24)"/>
<rect x="-40" y="552" width="1560" height="24" fill="url(#s25)"/>
<rect x="-40" y="576" width="1560" height="24" fill="url(#s26)"/>
<rect x="-40" y="600" width="1560" height="24" fill="url(#s27)"/>
<rect x="-40" y="624" width="1560" height="24" fill="url(#s28)"/>
<rect x="-40" y="648" width="1560" height="24" fill="url(#s29)"/>
</g>
<rect x="-20" y="260" width="1359" height="70" fill="url(#dband)" mask="url(#m2)"/>
<g filter="url(#b1)"><g clip-path="url(#cTop)"><g filter="url(#fbt)">
<rect x="560" y="-30" width="960" height="10" fill="url(#s30)"/>
<rect x="560" y="-20" width="960" height="10" fill="url(#s31)"/>
<rect x="560" y="-10" width="960" height="10" fill="url(#s32)"/>
<rect x="560" y="0" width="960" height="10" fill="url(#s33)"/>
<rect x="560" y="10" width="960" height="10" fill="url(#s34)"/>
<rect x="560" y="20" width="960" height="10" fill="url(#s35)"/>
<rect x="560" y="30" width="960" height="10" fill="url(#s36)"/>
<rect x="560" y="40" width="960" height="10" fill="url(#s37)"/>
<rect x="560" y="50" width="960" height="10" fill="url(#s38)"/>
<rect x="560" y="60" width="960" height="10" fill="url(#s39)"/>
<rect x="560" y="70" width="960" height="10" fill="url(#s40)"/>
<rect x="560" y="80" width="960" height="10" fill="url(#s41)"/>
<rect x="560" y="90" width="960" height="10" fill="url(#s42)"/>
<rect x="560" y="100" width="960" height="10" fill="url(#s43)"/>
</g></g></g>
<g filter="url(#b2)"><g clip-path="url(#cFloor)"><g filter="url(#fbt)">
<rect x="400" y="500" width="1120" height="12" fill="url(#s44)"/>
<rect x="400" y="512" width="1120" height="12" fill="url(#s45)"/>
<rect x="400" y="524" width="1120" height="12" fill="url(#s46)"/>
<rect x="400" y="536" width="1120" height="12" fill="url(#s47)"/>
<rect x="400" y="548" width="1120" height="12" fill="url(#s48)"/>
<rect x="400" y="560" width="1120" height="12" fill="url(#s49)"/>
<rect x="400" y="572" width="1120" height="12" fill="url(#s50)"/>
<rect x="400" y="584" width="1120" height="12" fill="url(#s51)"/>
<rect x="400" y="596" width="1120" height="12" fill="url(#s52)"/>
<rect x="400" y="608" width="1120" height="12" fill="url(#s53)"/>
<rect x="400" y="620" width="1120" height="12" fill="url(#s54)"/>
<rect x="400" y="632" width="1120" height="12" fill="url(#s55)"/>
</g></g></g>
<polygon points="1238,-1 1475,40 1475,-20 1238,-20" fill="url(#bandA)" filter="url(#b1)"/>
<g mask="url(#mE1)"><polyline points="600,-5.5 640,0.5 800,22.5 1000,46.5 1200,73.5 1354,94.5" fill="none" stroke="#60d0ff" stroke-width="4" filter="url(#b2)"/></g>
<polygon points="1354,92 1475,76 1475,291 1354,291" fill="#0898ee"/>
<polygon points="1354,92 1475,109 1475,291 1354,291" fill="url(#paneG)"/>
<rect x="1339" y="291" width="140" height="22" fill="#0058a8" filter="url(#b1)"/>
<polygon points="1352,313 1475,313 1475,499 1352,515" fill="url(#paneG)"/>
<polygon points="1352,515 1475,499 1475,534" fill="#0898e8"/>

<line x1="1354" y1="92" x2="1354" y2="291" stroke="#e8fbff" stroke-width="2" filter="url(#b1)"/>
<line x1="1354" y1="92" x2="1354" y2="291" stroke="#9fe4ff" stroke-width="6" opacity="0.5" filter="url(#b2)"/>
<line x1="1354" y1="291" x2="1475" y2="291" stroke="#b8ecff" stroke-width="2" opacity="0.9" filter="url(#b1)"/>
<line x1="1352" y1="313" x2="1475" y2="313" stroke="#b8ecff" stroke-width="2" opacity="0.9" filter="url(#b1)"/>
<line x1="1352" y1="313" x2="1352" y2="515" stroke="#e8fbff" stroke-width="2" filter="url(#b1)"/>
<line x1="1352" y1="313" x2="1352" y2="515" stroke="#9fe4ff" stroke-width="6" opacity="0.5" filter="url(#b2)"/>
<line x1="1354" y1="92" x2="1475" y2="76" stroke="#c8f0ff" stroke-width="2" opacity="0.8" filter="url(#b1)"/>
<line x1="1354" y1="92" x2="1475" y2="109" stroke="#e0f8ff" stroke-width="3.5" filter="url(#b1)"/>
<polygon points="1080,59 1354,87 1360,93 1354,98" fill="url(#sg1)" filter="url(#b2)"/>
<line x1="1352" y1="515" x2="1475" y2="499" stroke="#e8fbff" stroke-width="4" filter="url(#b1)"/>
<line x1="1352" y1="515" x2="1475" y2="534" stroke="#c8f0ff" stroke-width="2.5" opacity="0.9" filter="url(#b1)"/>
<polygon points="1260,515 1352,509 1358,515 1352,521" fill="url(#sg2)" filter="url(#b2)"/>
<polygon points="1350,92 1358,92 1355.5,170 1352.5,170" fill="url(#vg1)" filter="url(#b1)"/>
<polygon points="1348,515 1356,515 1353.5,450 1350.5,450" fill="url(#vg2)" filter="url(#b1)"/>
<circle cx="1354" cy="92" r="5" fill="#fff" filter="url(#b2)"/>
<circle cx="1352" cy="515" r="5" fill="#fff" filter="url(#b2)"/>

</svg>

<div class="win" style="left:63px;top:98px;width:510px;height:344px">
 <div class="tb"></div>
 <svg class="ico" viewBox="0 0 16 16"><path d="M9.58 4.56 A5.6 5.6 0 1 1 3.26 10.88" fill="none" stroke="#a08a5e" stroke-width="1.25"/><path d="M3.26 10.88 A5.6 5.6 0 0 1 7.83 4.58" fill="none" stroke="#983a36" stroke-width="1.25"/><path d="M2.3 4.7 V12.7" stroke="#ab3836" stroke-width="2.2"/><path d="M2.3 1.1 V3.8" stroke="#b58e70" stroke-width="2"/></svg>
 <div class="ttl" style="color:#959595">Rubot Youtube v.7.2.0.1 PID: 3940</div>
 <svg style="position:absolute;left:390px;top:0;width:120px;height:30px" viewBox="0 0 120 30"><path d="M1 14.5 H11" stroke="#8c8c8c" stroke-width="1"/><rect x="46.5" y="9.5" width="9" height="9" fill="none" stroke="#8c8c8c" stroke-width="1"/><path d="M92 9 L102 19 M102 9 L92 19" stroke="#8c8c8c" stroke-width="1"/></svg>
 <div class="menu"></div>
 <div class="mi" style="left:15px">Main</div>
 <div class="mi" style="left:61px">Modules</div>
 <div class="mi" style="left:126px">Chat-Bots</div>
 <div class="mi" style="left:198px">Chat-Grabbers</div>
 <div class="mi" style="left:294px">About</div>
 <div class="lbl" style="left:12px;top:66px">Step 1. Channel or ID:</div>
 <div class="lbl" style="left:188px;top:66px">Logs:</div>
 <div class="tbox" style="left:12px;top:81px;width:169px;height:20px"></div>
 <div class="lbl" style="left:12px;top:109px">Step 2. Set service:</div>
 <div class="cmb" style="left:12px;top:124px;width:169px;height:21px">YouTube-Premium<svg class="chev" viewBox="0 0 9 6"><path d="M0.5 0.8 L4.1 4.3 L7.7 0.8" fill="none" stroke="#4a4a4a" stroke-width="1.05"/></svg></div>
 <div class="lbl" style="left:12px;top:150px">Step 3. Set type proxy:</div>
 <div class="cmb" style="left:12px;top:165px;width:169px;height:21px">HTTP(s)<svg class="chev" viewBox="0 0 9 6"><path d="M0.5 0.8 L4.1 4.3 L7.7 0.8" fill="none" stroke="#4a4a4a" stroke-width="1.05"/></svg></div>
 <div class="lbl" style="left:12px;top:190px">Step 4. Upload proxies:</div>
 <div class="cmb" style="left:12px;top:205px;width:169px;height:21px">Rubot proxies<svg class="chev" viewBox="0 0 9 6"><path d="M0.5 0.8 L4.1 4.3 L7.7 0.8" fill="none" stroke="#4a4a4a" stroke-width="1.05"/></svg></div>
 <div class="lbl" style="left:12px;top:230px">Step 5. Threads:</div>
 <div class="num" style="left:12px;top:245px;width:169px;height:20px">500<svg class="spin" viewBox="0 0 14 16"><rect x="0.5" y="0.5" width="13" height="15" fill="#ececec" stroke="#b9b9b9"/><path d="M0.5 8 H13.5" stroke="#c8c8c8" stroke-width="1.2"/><path d="M4.5 5 L7 2 L9.5 5 Z M4.5 10.5 L9.5 10.5 L7 13.5 Z" fill="#000"/></svg></div>
 <div class="btn" style="left:13px;top:272px;width:167px;height:27px;line-height:27px">START</div>
 <div class="logs" style="left:187px;top:80px;width:313px;height:220px"><div class="logsin">Error getting parameter for Youtube
Premium: Error
Set type proxies: HTTP
Not service-proxy
Rubot Proxies: 1</div></div>
 <div class="sep" style="left:2px;top:321px;width:507px"></div>
 <div class="prog" style="left:2px;top:324px;width:490px;height:16px"></div>
 <div class="grip" style="left:495px;top:329px"><svg class="grip" viewBox="0 0 12 12"><g fill="#8f8f8f"><rect x="9" y="1" width="2" height="2"/><rect x="5" y="5" width="2" height="2"/><rect x="9" y="5" width="2" height="2"/><rect x="1" y="9" width="2" height="2"/><rect x="5" y="9" width="2" height="2"/><rect x="9" y="9" width="2" height="2"/></g></svg></div>
 <div class="bord"></div>
</div>

<div class="win" style="left:596px;top:101px;width:743px;height:344px">
 <div class="tb"></div>
 <svg class="ico" viewBox="0 0 16 16"><path d="M9.58 4.56 A5.6 5.6 0 1 1 3.26 10.88" fill="none" stroke="#a08a5e" stroke-width="1.25"/><path d="M3.26 10.88 A5.6 5.6 0 0 1 7.83 4.58" fill="none" stroke="#983a36" stroke-width="1.25"/><path d="M2.3 4.7 V12.7" stroke="#ab3836" stroke-width="2.2"/><path d="M2.3 1.1 V3.8" stroke="#b58e70" stroke-width="2"/></svg>
 <div class="ttl" style="color:#000">RBTools</div>
 <svg style="position:absolute;left:623px;top:0;width:120px;height:30px" viewBox="0 0 120 30"><path d="M1 14.5 H11" stroke="#000" stroke-width="1"/><rect x="46.5" y="9.5" width="9" height="9" fill="none" stroke="#000" stroke-width="1"/><path d="M92 9 L102 19 M102 9 L92 19" stroke="#000" stroke-width="1"/></svg>
 <div class="menu"></div>
 <div class="mi" style="left:15px">Main</div>
 <div class="mi" style="left:61px">Modules</div>
 <div class="mi" style="left:126px">Chat-Bots</div>
 <div class="mi" style="left:198px">Chat-Grabbers</div>
 <div class="mi" style="left:294px">About</div>
 <div class="lbl" style="left:12px;top:66px">Step 1. Channel or ID:</div>
 <div class="lbl" style="left:188px;top:66px">Logs:</div>
 <div class="tbox" style="left:12px;top:81px;width:169px;height:20px"></div>
 <div class="lbl" style="left:12px;top:109px">Step 2. Set service:</div>
 <div class="cmb" style="left:12px;top:124px;width:169px;height:21px">YouTube-Premium<svg class="chev" viewBox="0 0 9 6"><path d="M0.5 0.8 L4.1 4.3 L7.7 0.8" fill="none" stroke="#4a4a4a" stroke-width="1.05"/></svg></div>
 <div class="lbl" style="left:12px;top:150px">Step 3. Set type proxy:</div>
 <div class="cmb" style="left:12px;top:165px;width:169px;height:21px">HTTP(s)<svg class="chev" viewBox="0 0 9 6"><path d="M0.5 0.8 L4.1 4.3 L7.7 0.8" fill="none" stroke="#4a4a4a" stroke-width="1.05"/></svg></div>
 <div class="lbl" style="left:12px;top:190px">Step 4. Upload proxies:</div>
 <div class="cmb" style="left:12px;top:205px;width:169px;height:21px">Rubot proxies<svg class="chev" viewBox="0 0 9 6"><path d="M0.5 0.8 L4.1 4.3 L7.7 0.8" fill="none" stroke="#4a4a4a" stroke-width="1.05"/></svg></div>
 <div class="lbl" style="left:12px;top:230px">Step 5. Threads:</div>
 <div class="num" style="left:12px;top:245px;width:169px;height:20px">1000<svg class="spin" viewBox="0 0 14 16"><rect x="0.5" y="0.5" width="13" height="15" fill="#ececec" stroke="#b9b9b9"/><path d="M0.5 8 H13.5" stroke="#c8c8c8" stroke-width="1.2"/><path d="M4.5 5 L7 2 L9.5 5 Z M4.5 10.5 L9.5 10.5 L7 13.5 Z" fill="#000"/></svg></div>
 <div class="btn" style="left:13px;top:272px;width:167px;height:27px;line-height:27px">START</div>
 <div class="logs" style="left:187px;top:80px;width:313px;height:220px"><div class="logsin">Get param Youtube Premium: g3kIRtHKPV74qbPN
Premium: Active
Set type proxies: HTTP
Rubot Proxies: 4429<div style="position:absolute;left:2px;top:54px;width:1px;height:12px;background:#000"></div></div></div>
 <div class="sep" style="left:2px;top:321px;width:507px"></div>
 <div class="prog" style="left:2px;top:324px;width:490px;height:16px"></div>
 <div class="grip" style="left:495px;top:329px"><svg class="grip" viewBox="0 0 12 12"><g fill="#8f8f8f"><rect x="9" y="1" width="2" height="2"/><rect x="5" y="5" width="2" height="2"/><rect x="9" y="5" width="2" height="2"/><rect x="1" y="9" width="2" height="2"/><rect x="5" y="9" width="2" height="2"/><rect x="9" y="9" width="2" height="2"/></g></svg></div>
 <div class="bord"></div>
</div>
</body></html>
